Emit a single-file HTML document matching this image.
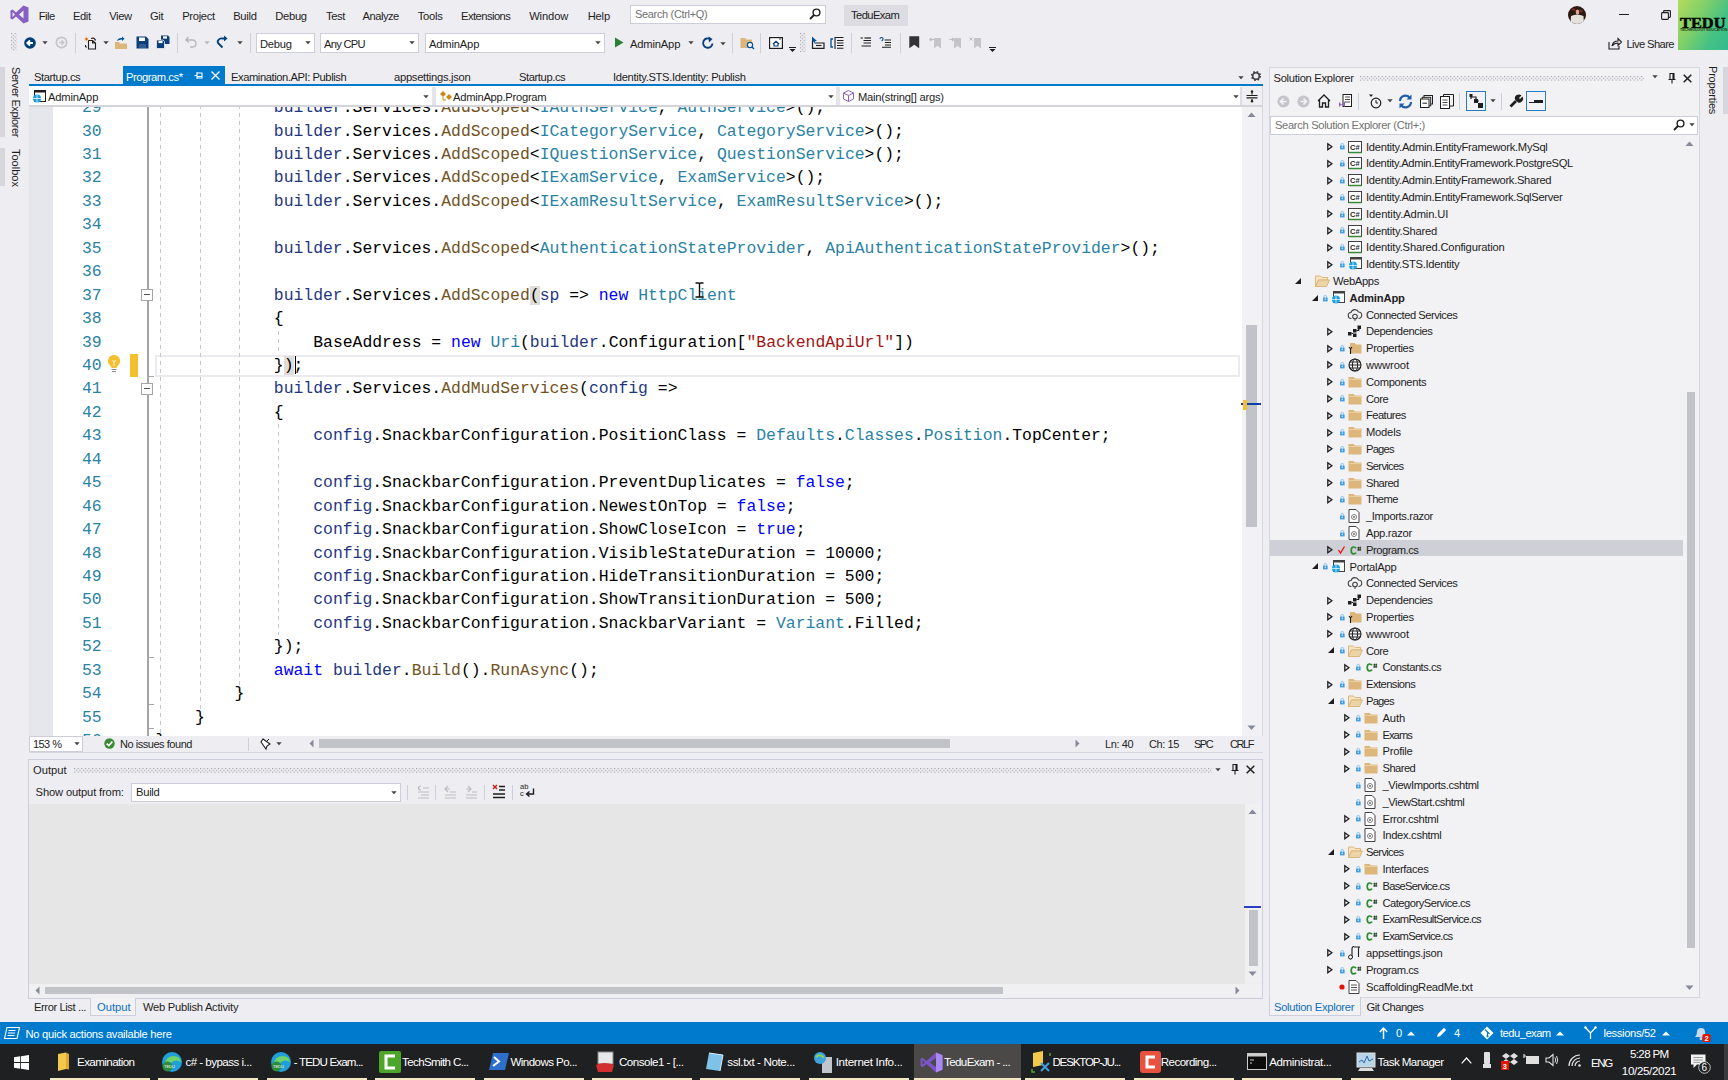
<!DOCTYPE html><html><head><meta charset="utf-8"><style>
html,body{margin:0;padding:0;}
body{width:1728px;height:1080px;overflow:hidden;position:relative;background:#EEEDF1;font-family:"Liberation Sans",sans-serif;}
.t{position:absolute;white-space:nowrap;line-height:1;}
.cl{position:absolute;white-space:pre;font-family:"Liberation Mono",monospace;font-size:16.41px;line-height:23.44px;height:23.44px;}
svg{position:absolute;overflow:visible;}
</style></head><body>
<svg width="0" height="0" style="position:absolute"><defs><pattern id="grp" width="3.6" height="3.6" patternUnits="userSpaceOnUse"><rect x="0" y="0" width="1.1" height="1.1" fill="#9A9AA4"/><rect x="1.8" y="1.8" width="1.1" height="1.1" fill="#9A9AA4"/></pattern></defs></svg>
<svg style="left:10px;top:5px" width="19" height="19" viewBox="0 0 19 19"><path d="M13.5 0.5 L18.5 2.5 L18.5 16.5 L13.5 18.5 L6 11.5 L2.5 14.5 L0.5 13.5 L0.5 5.5 L2.5 4.5 L6 7.5 Z M13.5 5.5 L9 9.5 L13.5 13.5 Z M2.5 7 L2.5 12 L5 9.5 Z" fill="#865FC5" fill-rule="evenodd"/></svg>
<div class="t" style="left:38.800000000000004px;top:10.52px;font-size:11.2px;color:#1E1E1E;letter-spacing:-0.545px;">File</div>
<div class="t" style="left:72.9px;top:10.52px;font-size:11.2px;color:#1E1E1E;letter-spacing:-0.386px;">Edit</div>
<div class="t" style="left:109.2px;top:10.52px;font-size:11.2px;color:#1E1E1E;letter-spacing:-0.367px;">View</div>
<div class="t" style="left:149.89999999999998px;top:10.52px;font-size:11.2px;color:#1E1E1E;letter-spacing:-0.246px;">Git</div>
<div class="t" style="left:182.2px;top:10.52px;font-size:11.2px;color:#1E1E1E;letter-spacing:-0.323px;">Project</div>
<div class="t" style="left:233.2px;top:10.52px;font-size:11.2px;color:#1E1E1E;letter-spacing:-0.276px;">Build</div>
<div class="t" style="left:275.2px;top:10.52px;font-size:11.2px;color:#1E1E1E;letter-spacing:-0.266px;">Debug</div>
<div class="t" style="left:325.9px;top:10.52px;font-size:11.2px;color:#1E1E1E;letter-spacing:-0.331px;">Test</div>
<div class="t" style="left:362.5px;top:10.52px;font-size:11.2px;color:#1E1E1E;letter-spacing:-0.500px;">Analyze</div>
<div class="t" style="left:417.7px;top:10.52px;font-size:11.2px;color:#1E1E1E;letter-spacing:-0.216px;">Tools</div>
<div class="t" style="left:461.09999999999997px;top:10.52px;font-size:11.2px;color:#1E1E1E;letter-spacing:-0.550px;">Extensions</div>
<div class="t" style="left:529.2px;top:10.52px;font-size:11.2px;color:#1E1E1E;letter-spacing:-0.126px;">Window</div>
<div class="t" style="left:587.7px;top:10.52px;font-size:11.2px;color:#1E1E1E;letter-spacing:-0.182px;">Help</div>
<div style="position:absolute;left:630px;top:5px;width:196px;height:19px;background:#FFFFFF;border:1px solid #CCCEDB;box-sizing:border-box;"></div>
<div class="t" style="left:635px;top:9.19px;font-size:11px;color:#717171;letter-spacing:-0.329px;">Search (Ctrl+Q)</div>
<svg style="left:809px;top:8px" width="12" height="12" viewBox="0 0 12 12"><circle cx="7.5" cy="4.5" r="3.4" fill="none" stroke="#1E1E1E" stroke-width="1.4"/><path d="M5 7 L1 11" stroke="#1E1E1E" stroke-width="1.8"/></svg>
<div style="position:absolute;left:844px;top:5px;width:64px;height:21px;background:#DCDCE2;"></div>
<div class="t" style="left:851px;top:10.02px;font-size:11.2px;color:#1E1E1E;letter-spacing:-0.579px;">TeduExam</div>
<svg style="left:1568px;top:6px" width="18" height="18" viewBox="0 0 18 18"><defs><clipPath id="avc"><circle cx="9" cy="9" r="9"/></clipPath></defs><g clip-path="url(#avc)"><rect width="18" height="18" fill="#2B1A12"/><path d="M3 4 L6 2 L8 5Z M11 3 L15 5 L13 7Z" fill="#8A2A2A"/><ellipse cx="9.5" cy="6" rx="1.8" ry="2.5" fill="#D9A98A"/><path d="M2.5 18 L3 10 Q9 7 15.5 10 L16 18Z" fill="#E6E0DA"/></g></svg>
<div style="position:absolute;left:1619px;top:14px;width:10px;height:1.3px;background:#1E1E1E;"></div>
<svg style="left:1661px;top:10px" width="10" height="10" viewBox="0 0 10 10"><rect x="0.6" y="2.6" width="6.8" height="6.8" rx="0.8" fill="none" stroke="#1E1E1E" stroke-width="1.1"/><path d="M2.6 2.6 V1.4 Q2.6 0.6 3.4 0.6 H8.6 Q9.4 0.6 9.4 1.4 V6.6 Q9.4 7.4 8.6 7.4 H7.4" fill="none" stroke="#1E1E1E" stroke-width="1.1"/></svg>
<div style="position:absolute;left:1678px;top:0;width:50px;height:50px;background:linear-gradient(120deg,#B4DB5C 0%,#7CCF6A 40%,#45C184 70%,#33BB8E 100%);"></div>
<div class="t" style="left:1679.5px;top:14.6px;font-family:'Liberation Serif',serif;font-weight:bold;font-size:15.3px;color:#050805;letter-spacing:0;transform:scaleX(1.07);transform-origin:left;-webkit-text-stroke:0.5px #050805;">TEDU</div>
<div class="t" style="left:1680px;top:29.4px;font-family:'Liberation Sans',sans-serif;font-size:3.6px;color:#1a3a14;letter-spacing:0;transform:scaleX(1.0);transform-origin:left;font-weight:bold;">TECHNOLOGY EDUCATION</div>
<svg style="left:1608px;top:37px" width="14" height="13" viewBox="0 0 14 13"><path d="M1 5 V12 H11 V9" fill="none" stroke="#1E1E1E" stroke-width="1.1"/><path d="M4 9 Q5 4 10 4 V1.5 L13.5 5 L10 8.5 V6 Q6.5 6 4 9Z" fill="none" stroke="#1E1E1E" stroke-width="1.1"/></svg>
<div class="t" style="left:1626.4px;top:38.52px;font-size:11.2px;color:#1E1E1E;letter-spacing:-0.590px;">Live Share</div>
<svg style="left:11px;top:33px" width="5.5" height="18"><rect width="5.5" height="18" fill="url(#grp)"/></svg>
<svg style="left:23.5px;top:37px" width="12" height="12" viewBox="0 0 12 12"><circle cx="6" cy="6" r="5.8" fill="#003E78"/><path d="M9 6 H3.8 M6 3.3 L3.3 6 L6 8.7" stroke="#fff" stroke-width="1.9" fill="none"/></svg>
<svg style="left:42px;top:41px" width="6" height="4"><path d="M0.3 0.3 H5.7 L3 3.3Z" fill="#424242"/></svg>
<svg style="left:55px;top:36px" width="13" height="13" viewBox="0 0 13 13"><circle cx="6.5" cy="6.5" r="6" fill="#C4C4CA"/><circle cx="6.5" cy="6.5" r="4.3" fill="#EEEEF2"/><path d="M4 6.5 H8.5 M6.5 4.3 L8.7 6.5 L6.5 8.7" stroke="#C4C4CA" stroke-width="1.4" fill="none"/></svg>
<div style="position:absolute;left:75px;top:33px;width:1px;height:20px;background:#CCCEDB;"></div>
<svg style="left:84px;top:36px" width="13" height="14" viewBox="0 0 13 14"><path d="M4.5 4.5 H8.5 L11.5 7 V13 H4.5Z M8.5 4.5 V7 H11.5" fill="none" stroke="#1E1E1E" stroke-width="1.1"/><path d="M7 2.5 Q10.5 1 11.5 4.5" fill="none" stroke="#1E1E1E" stroke-width="1.3"/><path d="M1.5 9 V11 H3" stroke="#1E1E1E" fill="none"/><path d="M2.5 0 L3 2 L5 1.5 L3.5 3 L5 4.5 L3 4 L2.5 6 L2 4 L0 4.5 L1.5 3 L0 1.5 L2 2Z" fill="#E8A23A"/><circle cx="2.5" cy="3" r="0.8" fill="#C0392B"/></svg>
<svg style="left:103px;top:41px" width="6" height="4"><path d="M0.3 0.3 H5.7 L3 3.3Z" fill="#424242"/></svg>
<svg style="left:114px;top:36px" width="14" height="14" viewBox="0 0 14 14"><path d="M1 6 H5 L6 7.5 H13 V13 H1Z" fill="#DCB67A"/><path d="M3 5 Q4 1.5 8 2 V0.5 L10.5 2.8 L8 5 V3.5 Q5 3.5 3 5" fill="#00539C"/></svg>
<svg style="left:136px;top:36px" width="13" height="13" viewBox="0 0 13 13"><path d="M0.5 0.5 H10 L12.5 3 V12.5 H0.5Z" fill="#0B3F7C"/><rect x="3" y="1.5" width="6" height="3.5" fill="#fff"/><rect x="3" y="8" width="7" height="4.5" fill="#fff" opacity="0.15"/></svg>
<svg style="left:156px;top:35px" width="14" height="14" viewBox="0 0 14 14"><path d="M5 0.5 H12 L13.5 2 V9 H5Z" fill="#0B3F7C"/><rect x="7" y="1.3" width="4" height="2.3" fill="#fff"/><path d="M0.5 5 H7 L8.5 6.5 V13.5 H0.5Z" fill="#0B3F7C" stroke="#EEEDF1" stroke-width="0.8"/><rect x="2.5" y="5.8" width="4" height="2.3" fill="#fff"/></svg>
<div style="position:absolute;left:177px;top:33px;width:1px;height:20px;background:#CCCEDB;"></div>
<svg style="left:185px;top:36px" width="12" height="12" viewBox="0 0 12 12"><path d="M3.5 1 L1 4 L4 6.5 M1.2 4 H7 Q11 4 11 8 Q11 11 7 11 H5" stroke="#B8B8C0" stroke-width="1.4" fill="none"/></svg>
<svg style="left:204px;top:41px" width="6" height="4"><path d="M0.3 0.3 H5.7 L3 3.3Z" fill="#B8B8C0"/></svg>
<svg style="left:216px;top:35px" width="12" height="14" viewBox="0 0 12 14"><path d="M6.5 12.5 L2.5 8.5 Q0.8 6.8 2.5 4.8 Q4 3 6.5 3.5 H9" fill="none" stroke="#00437A" stroke-width="1.8"/><path d="M8 0.5 L11.5 3.5 L8 6.5Z" fill="#00437A"/></svg>
<svg style="left:237px;top:41px" width="6" height="4"><path d="M0.3 0.3 H5.7 L3 3.3Z" fill="#424242"/></svg>
<div style="position:absolute;left:250px;top:33px;width:1px;height:20px;background:#CCCEDB;"></div>
<div style="position:absolute;left:256px;top:32.8px;width:59px;height:20.7px;background:#FFFFFF;border:1px solid #CCCEDB;box-sizing:border-box;"></div>
<div class="t" style="left:260px;top:38.52px;font-size:11.2px;color:#1E1E1E;letter-spacing:-0.266px;">Debug</div>
<svg style="left:305px;top:41.3px" width="6" height="4"><path d="M0.3 0.3 H5.7 L3 3.3Z" fill="#424242"/></svg>
<div style="position:absolute;left:320px;top:32.8px;width:99px;height:20.7px;background:#FFFFFF;border:1px solid #CCCEDB;box-sizing:border-box;"></div>
<div class="t" style="left:324px;top:38.52px;font-size:11.2px;color:#1E1E1E;letter-spacing:-0.743px;">Any CPU</div>
<svg style="left:409px;top:41.3px" width="6" height="4"><path d="M0.3 0.3 H5.7 L3 3.3Z" fill="#424242"/></svg>
<div style="position:absolute;left:425px;top:32.8px;width:180px;height:20.7px;background:#FFFFFF;border:1px solid #CCCEDB;box-sizing:border-box;"></div>
<div class="t" style="left:429px;top:38.52px;font-size:11.2px;color:#1E1E1E;letter-spacing:-0.175px;">AdminApp</div>
<svg style="left:595px;top:41.3px" width="6" height="4"><path d="M0.3 0.3 H5.7 L3 3.3Z" fill="#424242"/></svg>
<svg style="left:614px;top:37px" width="10" height="11"><path d="M1 0.5 L9.5 5.5 L1 10.5Z" fill="#2A7F35"/></svg>
<div class="t" style="left:630px;top:38.52px;font-size:11.2px;color:#1E1E1E;letter-spacing:-0.175px;">AdminApp</div>
<svg style="left:688px;top:41px" width="6" height="4"><path d="M0.3 0.3 H5.7 L3 3.3Z" fill="#424242"/></svg>
<svg style="left:701px;top:36px" width="14" height="14" viewBox="0 0 14 14"><path d="M11.5 7.5 A4.7 4.7 0 1 1 9.5 3.2" stroke="#0B3F7C" stroke-width="1.9" fill="none"/><path d="M7.5 0.5 L11.5 3 L8 6.5Z" fill="#0B3F7C"/></svg>
<svg style="left:720px;top:42px" width="6" height="4"><path d="M0.3 0.3 H5.7 L3 3.3Z" fill="#424242"/></svg>
<div style="position:absolute;left:732px;top:33px;width:1px;height:20px;background:#CCCEDB;"></div>
<svg style="left:740px;top:36px" width="15" height="14" viewBox="0 0 15 14"><path d="M0.5 2 H5 L6.5 3.5 H12 V12 H0.5Z" fill="#DCB67A"/><circle cx="10" cy="9" r="2.6" fill="#fff" stroke="#00539C" stroke-width="1.2"/><path d="M12 11 L14 13" stroke="#00539C" stroke-width="1.5"/></svg>
<div style="position:absolute;left:760px;top:33px;width:1px;height:20px;background:#CCCEDB;"></div>
<svg style="left:769px;top:37px" width="14" height="12" viewBox="0 0 14 12"><rect x="0.6" y="0.6" width="12.8" height="10.8" fill="#fff" stroke="#1E1E1E" stroke-width="1.2"/><path d="M4 7 L7 4.2 L10 7 M5 6.5 V9 H9 V6.5" stroke="#0B3F7C" fill="none" stroke-width="1.2"/><path d="M10 2 H12" stroke="#1E1E1E" stroke-width="0.8"/></svg>
<svg style="left:788.5px;top:46.5px" width="7" height="5" viewBox="0 0 7 5"><path d="M0 0.5 H7" stroke="#1E1E1E" stroke-width="1"/><path d="M0.5 2 H6.5 L3.5 5Z" fill="#1E1E1E"/></svg>
<svg style="left:800px;top:33px" width="5.5" height="19"><rect width="5.5" height="19" fill="url(#grp)"/></svg>
<svg style="left:811px;top:36px" width="14" height="13" viewBox="0 0 14 13"><path d="M1 0.5 V7 L2.6 5.4 L4 8 L5 7.5 L3.8 5 H6Z" fill="#00539C"/><path d="M1.5 5 V12.3 H13 V7 H5" fill="none" stroke="#1E1E1E" stroke-width="1.2"/><path d="M5 9.5 H10.5" stroke="#1E1E1E" stroke-width="1.1"/></svg>
<svg style="left:830px;top:36px" width="15" height="14" viewBox="0 0 15 14"><path d="M3 3 H1 V11 H3" fill="none" stroke="#00539C" stroke-width="1.3"/><path d="M5 1 V13 M5 1.5 H13.5 M7 4.5 H13.5 M7 7 H13.5 M7 9.5 H13.5 M7 12.3 H13.5" stroke="#1E1E1E" stroke-width="1.1"/></svg>
<div style="position:absolute;left:850.5px;top:33px;width:1px;height:20px;background:#CCCEDB;"></div>
<svg style="left:860px;top:37px" width="12" height="10" viewBox="0 0 12 10"><path d="M0.5 1 H3 M3.5 3.5 H11 M3.5 6 H11 M1.5 9 H11" stroke="#1E1E1E" stroke-width="1.2"/><path d="M4.5 1 H11" stroke="#1E1E1E" stroke-width="1.2"/></svg>
<svg style="left:879px;top:37px" width="13" height="11" viewBox="0 0 13 11"><path d="M1 2 Q1 0.5 2.5 0.5 Q4 0.5 4 2 Q4 3.5 2.5 4" fill="none" stroke="#00539C" stroke-width="1.2"/><path d="M5.5 3 H12 M6 5.5 H12 M6 8 H12 M3 10.3 H12" stroke="#1E1E1E" stroke-width="1.1"/></svg>
<div style="position:absolute;left:899.5px;top:33px;width:1px;height:20px;background:#CCCEDB;"></div>
<svg style="left:909px;top:36px" width="10.5" height="12.5" viewBox="0 0 10.5 12.5"><path d="M0.3 0.3 H10.2 V12.2 L5.25 8.8 L0.3 12.2Z" fill="#333337"/></svg>
<svg style="left:929px;top:37px" width="13" height="12" viewBox="0 0 13 12"><path d="M5 1 H12 V11.5 L8.5 8.8 L5 11.5Z" fill="#C4C4CA"/><path d="M5 2.5 H0.8 M2.5 0.8 L0.8 2.5 L2.5 4.2" stroke="#BBBBC2" stroke-width="1.1" fill="none"/></svg>
<svg style="left:949px;top:37px" width="13" height="12" viewBox="0 0 13 12"><path d="M5 1 H12 V11.5 L8.5 8.8 L5 11.5Z" fill="#C4C4CA"/><path d="M0.5 2.5 H4.5 M3 0.8 L4.7 2.5 L3 4.2" stroke="#BBBBC2" stroke-width="1.1" fill="none"/></svg>
<svg style="left:969px;top:37px" width="13" height="12" viewBox="0 0 13 12"><path d="M5 1 H12 V11.5 L8.5 8.8 L5 11.5Z" fill="#C4C4CA"/><path d="M0.5 0.5 L3.5 3.5 M3.5 0.5 L0.5 3.5" stroke="#BBBBC2" stroke-width="1"/></svg>
<svg style="left:988.5px;top:46.5px" width="7" height="5" viewBox="0 0 7 5"><path d="M0 0.5 H7" stroke="#1E1E1E" stroke-width="1"/><path d="M0.5 2 H6.5 L3.5 5Z" fill="#1E1E1E"/></svg>
<div style="position:absolute;left:0px;top:67px;width:5px;height:70px;background:#D6D6DC;"></div>
<div style="position:absolute;left:0px;top:148px;width:5px;height:38px;background:#D6D6DC;"></div>
<div class="t" style="left:21px;top:67px;font-size:11px;color:#1E1E1E;letter-spacing:-0.43px;transform:rotate(90deg);transform-origin:0 0;">Server Explorer</div>
<div class="t" style="left:21px;top:148.5px;font-size:11px;color:#1E1E1E;letter-spacing:0px;transform:rotate(90deg);transform-origin:0 0;">Toolbox</div>
<div style="position:absolute;left:29px;top:84px;width:1234px;height:2px;background:#007ACC;"></div>
<div style="position:absolute;left:123px;top:66px;width:102px;height:19px;background:#007ACC;"></div>
<div class="t" style="left:34px;top:72.02px;font-size:11.2px;color:#1E1E1E;letter-spacing:-0.411px;">Startup.cs</div>
<div class="t" style="left:126px;top:72.02px;font-size:11.2px;color:#FFFFFF;letter-spacing:-0.454px;">Program.cs*</div>
<svg style="left:194px;top:71px" width="10" height="9" viewBox="0 0 10 9"><path d="M0.5 4.5 H3 M3 1 V8 M3 2 H8 V7 H3 M3 5.5 H8" stroke="#fff" fill="none" stroke-width="1.1"/></svg>
<svg style="left:211px;top:71px" width="9" height="9" viewBox="0 0 9 9"><path d="M0.5 0.5 L8.5 8.5 M8.5 0.5 L0.5 8.5" stroke="#fff" stroke-width="1.3"/></svg>
<div class="t" style="left:231px;top:72.02px;font-size:11.2px;color:#1E1E1E;letter-spacing:-0.434px;">Examination.API: Publish</div>
<div class="t" style="left:394px;top:72.02px;font-size:11.2px;color:#1E1E1E;letter-spacing:-0.273px;">appsettings.json</div>
<div class="t" style="left:519px;top:72.02px;font-size:11.2px;color:#1E1E1E;letter-spacing:-0.411px;">Startup.cs</div>
<div class="t" style="left:613px;top:72.02px;font-size:11.2px;color:#1E1E1E;letter-spacing:-0.320px;">Identity.STS.Identity: Publish</div>
<svg style="left:1238px;top:76px" width="6" height="4"><path d="M0.3 0.3 H5.7 L3 3.3Z" fill="#424242"/></svg>
<svg style="left:1251px;top:71px" width="10" height="10" viewBox="0 0 10 10"><circle cx="5" cy="5" r="3.3" fill="none" stroke="#424242" stroke-width="1.6"/><circle cx="5" cy="5" r="4.3" fill="none" stroke="#424242" stroke-width="1.6" stroke-dasharray="1.6 1.78"/></svg>
<div style="position:absolute;left:29px;top:86px;width:1234px;height:21px;background:#FFFFFF;border-bottom:1px solid #CCCEDB;box-sizing:border-box;"></div>
<div style="position:absolute;left:432px;top:87px;width:3.5px;height:18px;background:#E4E4EA;"></div>
<div style="position:absolute;left:836px;top:87px;width:3.5px;height:18px;background:#E4E4EA;"></div>
<div style="position:absolute;left:1241px;top:86px;width:21px;height:19.5px;background:#F0F0F2;"></div>
<svg style="left:32px;top:90px" width="14" height="13" viewBox="0 0 14 13"><rect x="2.5" y="0.5" width="11" height="11" fill="#fff" stroke="#1E1E1E"/><rect x="2.5" y="0.5" width="11" height="2" fill="#1E1E1E"/><circle cx="5" cy="8.5" r="4" fill="#1BA1E2"/><path d="M1 8.5 H9 M5 4.5 V12.5" stroke="#fff" stroke-width="0.7"/></svg>
<div class="t" style="left:48px;top:91.52px;font-size:11.2px;color:#1E1E1E;letter-spacing:-0.175px;">AdminApp</div>
<svg style="left:423px;top:95px" width="6" height="4"><path d="M0.3 0.3 H5.7 L3 3.3Z" fill="#424242"/></svg>
<svg style="left:439px;top:90px" width="13" height="12" viewBox="0 0 13 12"><path d="M1 4 L4 1 L7 4 L4 7Z" fill="#D18616"/><path d="M7 7 L10 4 L13 7 L10 10Z" fill="#D18616"/><path d="M4 7 V10 H7" stroke="#D18616" fill="none"/></svg>
<div class="t" style="left:453px;top:91.52px;font-size:11.2px;color:#1E1E1E;letter-spacing:-0.267px;">AdminApp.Program</div>
<svg style="left:828px;top:95px" width="6" height="4"><path d="M0.3 0.3 H5.7 L3 3.3Z" fill="#424242"/></svg>
<svg style="left:843px;top:90px" width="11" height="12" viewBox="0 0 11 12"><path d="M5.5 0.5 L10.5 3 V9 L5.5 11.5 L0.5 9 V3Z M0.5 3 L5.5 5.5 L10.5 3 M5.5 5.5 V11.5" fill="none" stroke="#8B5FC5" stroke-width="1"/></svg>
<div class="t" style="left:858px;top:91.52px;font-size:11.2px;color:#1E1E1E;letter-spacing:-0.229px;">Main(string[] args)</div>
<svg style="left:1233px;top:95px" width="6" height="4"><path d="M0.3 0.3 H5.7 L3 3.3Z" fill="#424242"/></svg>
<svg style="left:1246px;top:90px" width="12" height="13" viewBox="0 0 12 13"><path d="M0.5 5.5 H11.5 M0.5 7.8 H11.5" stroke="#1E1E1E" stroke-width="1.2"/><path d="M6 1.5 V4.5 M6 9 V11.5" stroke="#1E1E1E" stroke-width="1.2"/><circle cx="6" cy="1.5" r="1.2" fill="#1E1E1E"/><circle cx="6" cy="11.3" r="1.2" fill="#1E1E1E"/></svg>
<div style="position:absolute;left:1240px;top:87px;width:2px;height:18px;background:#DCDCE2;"></div>
<div style="position:absolute;left:29px;top:104.5px;width:1233px;height:2px;background:#D4D4DA;"></div>
<div style="position:absolute;left:29px;top:107px;width:1233px;height:629px;background:#FFFFFF;overflow:hidden;">
<div style="position:absolute;left:0.00px;top:0.00px;width:24.00px;height:629.00px;background:#E6E7ED;"></div>
<div style="position:absolute;left:126.00px;top:247.50px;width:1085.00px;height:22.00px;border:2px solid #EAEAF0;box-sizing:border-box;"></div>
<div style="position:absolute;left:131.10px;top:-34.18px;width:1.00px;height:702.76px;background:repeating-linear-gradient(180deg,#C8C8C8 0 4px,transparent 4px 8px);"></div>
<div style="position:absolute;left:170.50px;top:-34.18px;width:1.00px;height:655.88px;background:repeating-linear-gradient(180deg,#C8C8C8 0 4px,transparent 4px 8px);"></div>
<div style="position:absolute;left:209.90px;top:-34.18px;width:1.00px;height:632.44px;background:repeating-linear-gradient(180deg,#C8C8C8 0 4px,transparent 4px 8px);"></div>
<div style="position:absolute;left:249.30px;top:223.66px;width:1.00px;height:23.00px;background:repeating-linear-gradient(180deg,#C8C8C8 0 4px,transparent 4px 8px);"></div>
<div style="position:absolute;left:249.30px;top:317.42px;width:1.00px;height:210.52px;background:repeating-linear-gradient(180deg,#C8C8C8 0 4px,transparent 4px 8px);"></div>
<div style="position:absolute;left:118.00px;top:0.00px;width:2.00px;height:629.00px;background:#A5A5A5;"></div>
<div style="position:absolute;left:112.00px;top:181.78px;width:12.00px;height:12.00px;background:#fff;border:1px solid #A5A5A5;box-sizing:border-box;"></div>
<div style="position:absolute;left:115.00px;top:187.28px;width:6.00px;height:1.00px;background:#555;"></div>
<div style="position:absolute;left:112.00px;top:275.54px;width:12.00px;height:12.00px;background:#fff;border:1px solid #A5A5A5;box-sizing:border-box;"></div>
<div style="position:absolute;left:115.00px;top:281.04px;width:6.00px;height:1.00px;background:#555;"></div>
<div style="position:absolute;left:120.00px;top:269.10px;width:5.00px;height:1.00px;background:#A5A5A5;"></div>
<div style="position:absolute;left:120.00px;top:550.38px;width:5.00px;height:1.00px;background:#A5A5A5;"></div>
<div style="position:absolute;left:120.00px;top:597.26px;width:5.00px;height:1.00px;background:#A5A5A5;"></div>
<div style="position:absolute;left:120.00px;top:620.70px;width:5.00px;height:1.00px;background:#A5A5A5;"></div>
<div style="position:absolute;left:101.00px;top:247.00px;width:7.50px;height:23.00px;background:#F4C02F;"></div>
<svg style="left:78px;top:247px" width="14" height="20" viewBox="0 0 14 20"><path d="M7 1 A6 6 0 0 1 11 11.5 Q9.5 12.5 9.5 14 H4.5 Q4.5 12.5 3 11.5 A6 6 0 0 1 7 1Z" fill="#F4C02F"/><path d="M5.5 6 L7 8 L8.5 6 M7 8 V12" stroke="#fff" fill="none" stroke-width="0.9"/><path d="M4.5 15.5 H9.5 M5 17.5 H9" stroke="#888" stroke-width="1.1"/></svg>
<div class="cl" style="left:43.05px;top:-10.83px;width:29.55px;text-align:right;color:#2A82A4;">29</div>
<div class="cl" style="left:43.05px;top:12.61px;width:29.55px;text-align:right;color:#2A82A4;">30</div>
<div class="cl" style="left:43.05px;top:36.05px;width:29.55px;text-align:right;color:#2A82A4;">31</div>
<div class="cl" style="left:43.05px;top:59.49px;width:29.55px;text-align:right;color:#2A82A4;">32</div>
<div class="cl" style="left:43.05px;top:82.93px;width:29.55px;text-align:right;color:#2A82A4;">33</div>
<div class="cl" style="left:43.05px;top:106.37px;width:29.55px;text-align:right;color:#2A82A4;">34</div>
<div class="cl" style="left:43.05px;top:129.81px;width:29.55px;text-align:right;color:#2A82A4;">35</div>
<div class="cl" style="left:43.05px;top:153.25px;width:29.55px;text-align:right;color:#2A82A4;">36</div>
<div class="cl" style="left:43.05px;top:176.69px;width:29.55px;text-align:right;color:#2A82A4;">37</div>
<div class="cl" style="left:43.05px;top:200.13px;width:29.55px;text-align:right;color:#2A82A4;">38</div>
<div class="cl" style="left:43.05px;top:223.57px;width:29.55px;text-align:right;color:#2A82A4;">39</div>
<div class="cl" style="left:43.05px;top:247.01px;width:29.55px;text-align:right;color:#2A82A4;">40</div>
<div class="cl" style="left:43.05px;top:270.45px;width:29.55px;text-align:right;color:#2A82A4;">41</div>
<div class="cl" style="left:43.05px;top:293.89px;width:29.55px;text-align:right;color:#2A82A4;">42</div>
<div class="cl" style="left:43.05px;top:317.33px;width:29.55px;text-align:right;color:#2A82A4;">43</div>
<div class="cl" style="left:43.05px;top:340.77px;width:29.55px;text-align:right;color:#2A82A4;">44</div>
<div class="cl" style="left:43.05px;top:364.21px;width:29.55px;text-align:right;color:#2A82A4;">45</div>
<div class="cl" style="left:43.05px;top:387.65px;width:29.55px;text-align:right;color:#2A82A4;">46</div>
<div class="cl" style="left:43.05px;top:411.09px;width:29.55px;text-align:right;color:#2A82A4;">47</div>
<div class="cl" style="left:43.05px;top:434.53px;width:29.55px;text-align:right;color:#2A82A4;">48</div>
<div class="cl" style="left:43.05px;top:457.97px;width:29.55px;text-align:right;color:#2A82A4;">49</div>
<div class="cl" style="left:43.05px;top:481.41px;width:29.55px;text-align:right;color:#2A82A4;">50</div>
<div class="cl" style="left:43.05px;top:504.85px;width:29.55px;text-align:right;color:#2A82A4;">51</div>
<div class="cl" style="left:43.05px;top:528.29px;width:29.55px;text-align:right;color:#2A82A4;">52</div>
<div class="cl" style="left:43.05px;top:551.73px;width:29.55px;text-align:right;color:#2A82A4;">53</div>
<div class="cl" style="left:43.05px;top:575.17px;width:29.55px;text-align:right;color:#2A82A4;">54</div>
<div class="cl" style="left:43.05px;top:598.61px;width:29.55px;text-align:right;color:#2A82A4;">55</div>
<div class="cl" style="left:43.05px;top:622.05px;width:29.55px;text-align:right;color:#2A82A4;">56</div>
<div class="cl" style="left:244.80px;top:-10.83px;"><span style="color:#1F377F;">builder</span><span style="color:#000000;">.Services.</span><span style="color:#74531F;">AddScoped</span><span style="color:#000000;">&lt;</span><span style="color:#2A82A4;">IAuthService</span><span style="color:#000000;">, </span><span style="color:#2A82A4;">AuthService</span><span style="color:#000000;">&gt;();</span></div>
<div class="cl" style="left:244.80px;top:12.61px;"><span style="color:#1F377F;">builder</span><span style="color:#000000;">.Services.</span><span style="color:#74531F;">AddScoped</span><span style="color:#000000;">&lt;</span><span style="color:#2A82A4;">ICategoryService</span><span style="color:#000000;">, </span><span style="color:#2A82A4;">CategoryService</span><span style="color:#000000;">&gt;();</span></div>
<div class="cl" style="left:244.80px;top:36.05px;"><span style="color:#1F377F;">builder</span><span style="color:#000000;">.Services.</span><span style="color:#74531F;">AddScoped</span><span style="color:#000000;">&lt;</span><span style="color:#2A82A4;">IQuestionService</span><span style="color:#000000;">, </span><span style="color:#2A82A4;">QuestionService</span><span style="color:#000000;">&gt;();</span></div>
<div class="cl" style="left:244.80px;top:59.49px;"><span style="color:#1F377F;">builder</span><span style="color:#000000;">.Services.</span><span style="color:#74531F;">AddScoped</span><span style="color:#000000;">&lt;</span><span style="color:#2A82A4;">IExamService</span><span style="color:#000000;">, </span><span style="color:#2A82A4;">ExamService</span><span style="color:#000000;">&gt;();</span></div>
<div class="cl" style="left:244.80px;top:82.93px;"><span style="color:#1F377F;">builder</span><span style="color:#000000;">.Services.</span><span style="color:#74531F;">AddScoped</span><span style="color:#000000;">&lt;</span><span style="color:#2A82A4;">IExamResultService</span><span style="color:#000000;">, </span><span style="color:#2A82A4;">ExamResultService</span><span style="color:#000000;">&gt;();</span></div>
<div class="cl" style="left:244.80px;top:129.81px;"><span style="color:#1F377F;">builder</span><span style="color:#000000;">.Services.</span><span style="color:#74531F;">AddScoped</span><span style="color:#000000;">&lt;</span><span style="color:#2A82A4;">AuthenticationStateProvider</span><span style="color:#000000;">, </span><span style="color:#2A82A4;">ApiAuthenticationStateProvider</span><span style="color:#000000;">&gt;();</span></div>
<div class="cl" style="left:244.80px;top:176.69px;"><span style="color:#1F377F;">builder</span><span style="color:#000000;">.Services.</span><span style="color:#74531F;">AddScoped</span><span style="color:#000000;background:#E0DDD8;">(</span><span style="color:#1F377F;">sp</span><span style="color:#000000;"> =&gt; </span><span style="color:#0000FF;">new</span><span style="color:#000000;"> </span><span style="color:#2A82A4;">HttpClient</span></div>
<div class="cl" style="left:244.80px;top:200.13px;"><span style="color:#000000;">{</span></div>
<div class="cl" style="left:284.20px;top:223.57px;"><span style="color:#000000;">BaseAddress</span><span style="color:#000000;"> = </span><span style="color:#0000FF;">new</span><span style="color:#000000;"> </span><span style="color:#2A82A4;">Uri</span><span style="color:#000000;">(</span><span style="color:#1F377F;">builder</span><span style="color:#000000;">.Configuration[</span><span style="color:#A31515;">&quot;BackendApiUrl&quot;</span><span style="color:#000000;">])</span></div>
<div class="cl" style="left:244.80px;top:247.01px;"><span style="color:#000000;">}</span><span style="color:#000000;background:#E0DDD8;">)</span><span style="color:#000000;">;</span></div>
<div class="cl" style="left:244.80px;top:270.45px;"><span style="color:#1F377F;">builder</span><span style="color:#000000;">.Services.</span><span style="color:#74531F;">AddMudServices</span><span style="color:#000000;">(</span><span style="color:#1F377F;">config</span><span style="color:#000000;"> =&gt;</span></div>
<div class="cl" style="left:244.80px;top:293.89px;"><span style="color:#000000;">{</span></div>
<div class="cl" style="left:284.20px;top:317.33px;"><span style="color:#1F377F;">config</span><span style="color:#000000;">.SnackbarConfiguration.PositionClass = </span><span style="color:#2A82A4;">Defaults</span><span style="color:#000000;">.</span><span style="color:#2A82A4;">Classes</span><span style="color:#000000;">.</span><span style="color:#2A82A4;">Position</span><span style="color:#000000;">.TopCenter;</span></div>
<div class="cl" style="left:284.20px;top:364.21px;"><span style="color:#1F377F;">config</span><span style="color:#000000;">.SnackbarConfiguration.PreventDuplicates = </span><span style="color:#0000FF;">false</span><span style="color:#000000;">;</span></div>
<div class="cl" style="left:284.20px;top:387.65px;"><span style="color:#1F377F;">config</span><span style="color:#000000;">.SnackbarConfiguration.NewestOnTop = </span><span style="color:#0000FF;">false</span><span style="color:#000000;">;</span></div>
<div class="cl" style="left:284.20px;top:411.09px;"><span style="color:#1F377F;">config</span><span style="color:#000000;">.SnackbarConfiguration.ShowCloseIcon = </span><span style="color:#0000FF;">true</span><span style="color:#000000;">;</span></div>
<div class="cl" style="left:284.20px;top:434.53px;"><span style="color:#1F377F;">config</span><span style="color:#000000;">.SnackbarConfiguration.VisibleStateDuration = 10000;</span></div>
<div class="cl" style="left:284.20px;top:457.97px;"><span style="color:#1F377F;">config</span><span style="color:#000000;">.SnackbarConfiguration.HideTransitionDuration = 500;</span></div>
<div class="cl" style="left:284.20px;top:481.41px;"><span style="color:#1F377F;">config</span><span style="color:#000000;">.SnackbarConfiguration.ShowTransitionDuration = 500;</span></div>
<div class="cl" style="left:284.20px;top:504.85px;"><span style="color:#1F377F;">config</span><span style="color:#000000;">.SnackbarConfiguration.SnackbarVariant = </span><span style="color:#2A82A4;">Variant</span><span style="color:#000000;">.Filled;</span></div>
<div class="cl" style="left:244.80px;top:528.29px;"><span style="color:#000000;">});</span></div>
<div class="cl" style="left:244.80px;top:551.73px;"><span style="color:#0000FF;">await</span><span style="color:#000000;"> </span><span style="color:#1F377F;">builder</span><span style="color:#000000;">.</span><span style="color:#74531F;">Build</span><span style="color:#000000;">().</span><span style="color:#74531F;">RunAsync</span><span style="color:#000000;">();</span></div>
<div class="cl" style="left:205.40px;top:575.17px;"><span style="color:#000000;">}</span></div>
<div class="cl" style="left:166.00px;top:598.61px;"><span style="color:#000000;">}</span></div>
<div class="cl" style="left:126.60px;top:622.05px;"><span style="color:#000000;">}</span></div>
<div style="position:absolute;left:265.50px;top:249.10px;width:1.50px;height:18.00px;background:#000;"></div>
<svg style="left:666px;top:175px" width="9" height="16" viewBox="0 0 9 16"><path d="M0.5 1 H3.5 Q4.5 1 4.5 2 V14 Q4.5 15 3.5 15 H0.5 M8.5 1 H5.5 Q4.5 1 4.5 2 M4.5 14 Q4.5 15 5.5 15 H8.5" stroke="#111" stroke-width="1.4" fill="none"/></svg>
<div style="position:absolute;left:1213.00px;top:0.00px;width:20.00px;height:629.00px;background:#F2F2F4;"></div>
<svg style="left:1218px;top:5px" width="9" height="6"><path d="M0.5 5 L4.5 0.5 L8.5 5Z" fill="#868999"/></svg>
<svg style="left:1218px;top:618px" width="9" height="6"><path d="M0.5 0.5 L4.5 5 L8.5 0.5Z" fill="#868999"/></svg>
<div style="position:absolute;left:1217.00px;top:218.00px;width:11.00px;height:202.00px;background:#C2C3C9;"></div>
<div style="position:absolute;left:1212.00px;top:296.00px;width:20.00px;height:2.00px;background:#0E3FA6;"></div>
<div style="position:absolute;left:1214.00px;top:293.00px;width:4.00px;height:10.00px;background:#F4C02F;"></div>
</div>
<div style="position:absolute;left:1262px;top:86px;width:1px;height:666px;background:#D6D6DE;"></div>
<div style="position:absolute;left:29px;top:736px;width:1234px;height:16px;background:#EEEEF2;"></div>
<div style="position:absolute;left:29px;top:736px;width:54px;height:16px;background:#FFFFFF;border:1px solid #CCCEDB;box-sizing:border-box;"></div>
<div class="t" style="left:33px;top:738.69px;font-size:11px;color:#1E1E1E;letter-spacing:-0.558px;">153 %</div>
<svg style="left:74px;top:742px" width="6" height="4"><path d="M0.3 0.3 H5.7 L3 3.3Z" fill="#424242"/></svg>
<svg style="left:104px;top:738px" width="11" height="11" viewBox="0 0 11 11"><circle cx="5.5" cy="5.5" r="5.2" fill="#388A34"/><path d="M2.7 5.6 L4.8 7.6 L8.4 3.6" stroke="#fff" stroke-width="1.6" fill="none"/></svg>
<div class="t" style="left:120px;top:738.69px;font-size:11px;color:#1E1E1E;letter-spacing:-0.463px;">No issues found</div>
<div style="position:absolute;left:248px;top:738px;width:1px;height:13px;background:#CCCEDB;"></div>
<svg style="left:260px;top:738px" width="12" height="12" viewBox="0 0 12 12"><path d="M3 1 L10 6 L7 8 L6 11 L1 4Z" fill="#fff" stroke="#1E1E1E" stroke-width="1.1"/><path d="M6 4 L9 1" stroke="#1E1E1E"/></svg>
<svg style="left:276px;top:742px" width="6" height="4"><path d="M0.3 0.3 H5.7 L3 3.3Z" fill="#424242"/></svg>
<svg style="left:309px;top:739px" width="5" height="9"><path d="M4.5 0.5 V8.5 L0.5 4.5Z" fill="#868999"/></svg>
<div style="position:absolute;left:319px;top:739px;width:631px;height:9px;background:#C2C3C9;"></div>
<svg style="left:1075px;top:739px" width="5" height="9"><path d="M0.5 0.5 V8.5 L4.5 4.5Z" fill="#868999"/></svg>
<div class="t" style="left:1105px;top:738.69px;font-size:11px;color:#1E1E1E;letter-spacing:-0.411px;">Ln: 40</div>
<div class="t" style="left:1149px;top:738.69px;font-size:11px;color:#1E1E1E;letter-spacing:-0.431px;">Ch: 15</div>
<div class="t" style="left:1194px;top:738.69px;font-size:11px;color:#1E1E1E;letter-spacing:-1.480px;">SPC</div>
<div class="t" style="left:1230px;top:738.69px;font-size:11px;color:#1E1E1E;letter-spacing:-1.421px;">CRLF</div>
<div style="position:absolute;left:29px;top:752px;width:1234px;height:1.2px;background:#D6D6DE;"></div>
<div style="position:absolute;left:28px;top:758.5px;width:1235px;height:240px;background:#EEEEF2;border:1px solid #CCCEDB;border-top-width:1.5px;box-sizing:border-box;"></div>
<div class="t" style="left:33px;top:764.52px;font-size:11.2px;color:#1E1E1E;letter-spacing:-0.016px;">Output</div>
<svg style="left:74px;top:768px" width="1138" height="5"><rect width="1138" height="5" fill="url(#grp)"/></svg>
<svg style="left:1215px;top:768px" width="6" height="4"><path d="M0.3 0.3 H5.7 L3 3.3Z" fill="#424242"/></svg>
<svg style="left:1231px;top:764px" width="8" height="11" viewBox="0 0 8 11"><path d="M1.5 0.5 H6.5 M2 0.5 V6.5 M6 0.5 V6.5 M0.5 6.5 H7.5 M4 6.5 V10.5 M5 1 V6" stroke="#1E1E1E" stroke-width="1.1" fill="none"/></svg>
<svg style="left:1246px;top:765px" width="9" height="9" viewBox="0 0 9 9"><path d="M0.7 0.7 L8.3 8.3 M8.3 0.7 L0.7 8.3" stroke="#1E1E1E" stroke-width="1.5"/></svg>
<div class="t" style="left:35.6px;top:787.02px;font-size:11.2px;color:#1E1E1E;letter-spacing:-0.151px;">Show output from:</div>
<div style="position:absolute;left:131px;top:783px;width:270px;height:19px;background:#FFFFFF;border:1px solid #CCCEDB;box-sizing:border-box;"></div>
<div class="t" style="left:136px;top:787.02px;font-size:11.2px;color:#1E1E1E;letter-spacing:-0.276px;">Build</div>
<svg style="left:391px;top:790.5px" width="6" height="4"><path d="M0.3 0.3 H5.7 L3 3.3Z" fill="#424242"/></svg>
<div style="position:absolute;left:407px;top:785px;width:1px;height:15px;background:#CCCEDB;"></div>
<div style="position:absolute;left:435px;top:785px;width:1px;height:15px;background:#CCCEDB;"></div>
<div style="position:absolute;left:484px;top:785px;width:1px;height:15px;background:#CCCEDB;"></div>
<div style="position:absolute;left:512px;top:785px;width:1px;height:15px;background:#CCCEDB;"></div>
<svg style="left:417px;top:785px" width="13" height="14" viewBox="0 0 13 14"><path d="M4 1 Q1.5 1 1.5 3 Q1.5 5 4 5 M1 7 H12 M4 10 H12 M1 13 H12 M6 3 H12" stroke="#BBBBC2" stroke-width="1.2" fill="none"/></svg>
<svg style="left:444px;top:785px" width="13" height="14" viewBox="0 0 13 14"><path d="M4 1 L1 4 L4 7 M1 4 H6 M6 7 H12 M1 10 H12 M1 13 H12" stroke="#BBBBC2" stroke-width="1.2" fill="none"/></svg>
<svg style="left:465px;top:785px" width="13" height="14" viewBox="0 0 13 14"><path d="M3 1 L6 4 L3 7 M1 4 H6 M7 7 H12 M1 10 H12 M1 13 H12" stroke="#BBBBC2" stroke-width="1.2" fill="none"/></svg>
<svg style="left:492px;top:784px" width="14" height="15" viewBox="0 0 14 15"><path d="M1 1 L5 5 M5 1 L1 5" stroke="#C41A1A" stroke-width="1.4"/><path d="M7 2.5 H13 M7 6 H13 M1 10 H13 M1 13.5 H13" stroke="#1E1E1E" stroke-width="1.5"/></svg>
<div class="t" style="left:520px;top:783px;font-size:7.5px;color:#1E1E1E;line-height:7px;">ab<br>c</div>
<svg style="left:525px;top:788px" width="10" height="10" viewBox="0 0 10 10"><path d="M8.5 0.5 V6 H2 M4.5 3.5 L1.5 6 L4.5 8.5" stroke="#1E1E1E" stroke-width="1.4" fill="none"/></svg>
<div style="position:absolute;left:29px;top:803.5px;width:1216px;height:180px;background:#E6E6E6;"></div>
<div style="position:absolute;left:1245px;top:803.5px;width:17px;height:178.5px;background:#F0F0F2;"></div>
<svg style="left:1248px;top:809px" width="9" height="6"><path d="M0.5 5 L4.5 0.5 L8.5 5Z" fill="#868999"/></svg>
<svg style="left:1248px;top:971px" width="9" height="6"><path d="M0.5 0.5 L4.5 5 L8.5 0.5Z" fill="#868999"/></svg>
<div style="position:absolute;left:1249px;top:910px;width:9px;height:56px;background:#C2C3C9;"></div>
<div style="position:absolute;left:1244px;top:906px;width:17px;height:2px;background:#2B3FC0;"></div>
<div style="position:absolute;left:29px;top:983.5px;width:1233px;height:13.5px;background:#F0F0F2;"></div>
<svg style="left:35px;top:986px" width="5" height="9"><path d="M4.5 0.5 V8.5 L0.5 4.5Z" fill="#868999"/></svg>
<div style="position:absolute;left:45px;top:987px;width:958px;height:7px;background:#C2C3C9;"></div>
<svg style="left:1235px;top:986px" width="5" height="9"><path d="M0.5 0.5 V8.5 L4.5 4.5Z" fill="#868999"/></svg>
<div style="position:absolute;left:90px;top:998px;width:46px;height:17.5px;background:#F2F1F4;border:1px solid #CCCEDB;border-top:none;box-sizing:border-box;"></div>
<div class="t" style="left:34px;top:1002.02px;font-size:11.2px;color:#1E1E1E;letter-spacing:-0.414px;">Error List ...</div>
<div class="t" style="left:97px;top:1002.02px;font-size:11.2px;color:#0E70C0;letter-spacing:-0.016px;">Output</div>
<div class="t" style="left:143px;top:1002.02px;font-size:11.2px;color:#1E1E1E;letter-spacing:-0.264px;">Web Publish Activity</div>
<div style="position:absolute;left:1269px;top:67px;width:431px;height:931px;background:#F2F1F4;border:1px solid #D6D6DE;box-sizing:border-box;"></div>
<div class="t" style="left:1273.5px;top:73.02px;font-size:11.2px;color:#1E1E1E;letter-spacing:-0.299px;">Solution Explorer</div>
<svg style="left:1360px;top:76px" width="284" height="5"><rect width="284" height="5" fill="url(#grp)"/></svg>
<svg style="left:1652px;top:75px" width="6" height="4"><path d="M0.3 0.3 H5.7 L3 3.3Z" fill="#424242"/></svg>
<svg style="left:1668px;top:73px" width="8" height="11" viewBox="0 0 8 11"><path d="M1.5 0.5 H6.5 M2 0.5 V6.5 M6 0.5 V6.5 M0.5 6.5 H7.5 M4 6.5 V10.5 M5 1 V6" stroke="#1E1E1E" stroke-width="1.1" fill="none"/></svg>
<svg style="left:1683px;top:74px" width="9" height="9" viewBox="0 0 9 9"><path d="M0.7 0.7 L8.3 8.3 M8.3 0.7 L0.7 8.3" stroke="#1E1E1E" stroke-width="1.5"/></svg>
<svg style="left:1277px;top:95px" width="13" height="13" viewBox="0 0 13 13"><circle cx="6.5" cy="6.5" r="6" fill="#C4C4CA"/><path d="M9.5 6.5 H4 M6.5 3.5 L3.5 6.5 L6.5 9.5" stroke="#F3F3F6" stroke-width="1.6" fill="none"/></svg>
<svg style="left:1297px;top:95px" width="13" height="13" viewBox="0 0 13 13"><circle cx="6.5" cy="6.5" r="6" fill="#C4C4CA"/><path d="M3.5 6.5 H9 M6.5 3.5 L9.5 6.5 L6.5 9.5" stroke="#F3F3F6" stroke-width="1.6" fill="none"/></svg>
<svg style="left:1317px;top:94px" width="14" height="14" viewBox="0 0 14 14"><path d="M1 7 L7 1 L13 7 M2.5 5.5 V13 H5.5 V9 H8.5 V13 H11.5 V5.5" stroke="#1E1E1E" stroke-width="1.3" fill="none"/></svg>
<svg style="left:1338px;top:94px" width="14" height="14" viewBox="0 0 14 14"><rect x="5" y="0.5" width="8.5" height="12" fill="#fff" stroke="#1E1E1E"/><path d="M7 3 H12 M7 5.5 H12 M7 8 H12" stroke="#1E1E1E" stroke-width="0.8"/><path d="M1 8 L4 11 L7 7 V13 L4 10 L1 13Z" fill="#8B5FC5"/></svg>
<div style="position:absolute;left:1358px;top:93px;width:1px;height:17px;background:#CCCEDB;"></div>
<svg style="left:1368px;top:94px" width="14" height="15" viewBox="0 0 14 15"><circle cx="8" cy="9" r="4.8" fill="none" stroke="#1E1E1E" stroke-width="1.2"/><path d="M8 6 V9 H10" stroke="#1E1E1E" fill="none"/><path d="M1 0.5 H5 L3 3Z" fill="#1E1E1E"/></svg>
<svg style="left:1387px;top:99px" width="6" height="4"><path d="M0.3 0.3 H5.7 L3 3.3Z" fill="#424242"/></svg>
<svg style="left:1398px;top:94px" width="15" height="15" viewBox="0 0 15 15"><path d="M2 7 A5.5 5.5 0 0 1 12 4 M13 8 A5.5 5.5 0 0 1 3 11" stroke="#1F5FAA" stroke-width="2.2" fill="none"/><path d="M13.5 0.5 V5.5 H8.5Z M1.5 14.5 V9.5 H6.5Z" fill="#1F5FAA"/></svg>
<svg style="left:1420px;top:95px" width="13" height="13" viewBox="0 0 13 13"><rect x="4" y="0.5" width="8.5" height="8.5" fill="#fff" stroke="#1E1E1E"/><rect x="2.2" y="2.3" width="8.5" height="8.5" fill="#fff" stroke="#1E1E1E"/><rect x="0.5" y="4" width="8.5" height="8.5" fill="#fff" stroke="#1E1E1E"/><path d="M2.5 8.2 H7" stroke="#1E1E1E"/></svg>
<svg style="left:1440px;top:94px" width="14" height="15" viewBox="0 0 14 15"><rect x="0.5" y="2.5" width="9" height="12" fill="#fff" stroke="#1E1E1E"/><path d="M3.5 2.5 V0.5 H13.5 V12 H9.5" fill="none" stroke="#1E1E1E"/><path d="M2.5 6 H7.5 M2.5 8.5 H7.5 M2.5 11 H7.5" stroke="#1E1E1E" stroke-width="0.8"/></svg>
<div style="position:absolute;left:1459px;top:93px;width:1px;height:17px;background:#CCCEDB;"></div>
<div style="position:absolute;left:1466px;top:91px;width:20px;height:20px;background:#F3F3F6;border:1.5px solid #2A7BC0;box-sizing:border-box;"></div>
<svg style="left:1469px;top:94px" width="14" height="14" viewBox="0 0 14 14"><path d="M2 1 V5 M2 3 H7 V8 M7 7 H10" stroke="#1E1E1E" stroke-width="1.2" fill="none"/><rect x="0.5" y="0" width="3" height="3" fill="#1E1E1E"/><rect x="5" y="5" width="4" height="4" fill="#1E1E1E"/><rect x="9" y="9" width="5" height="5" fill="#1E1E1E"/></svg>
<svg style="left:1490px;top:99px" width="6" height="4"><path d="M0.3 0.3 H5.7 L3 3.3Z" fill="#424242"/></svg>
<div style="position:absolute;left:1501px;top:93px;width:1px;height:17px;background:#CCCEDB;"></div>
<svg style="left:1509px;top:94px" width="14" height="14" viewBox="0 0 14 14"><path d="M1.5 12.5 L7 7" stroke="#1E1E1E" stroke-width="2.6"/><path d="M6 5.5 A4 4 0 0 1 12.5 1.5 L10 4 L11 5 L13.5 2.5 A4 4 0 0 1 9 8.5Z" fill="#1E1E1E"/></svg>
<div style="position:absolute;left:1526px;top:91px;width:20px;height:20px;background:#F3F3F6;border:1.5px solid #2A7BC0;box-sizing:border-box;"></div>
<div style="position:absolute;left:1534px;top:100px;width:9px;height:3px;background:#1E1E1E;"></div>
<div style="position:absolute;left:1529px;top:102px;width:6px;height:1px;background:#1E1E1E;"></div>
<div style="position:absolute;left:1270px;top:116px;width:428px;height:19px;background:#FFFFFF;border:1px solid #CCCEDB;box-sizing:border-box;"></div>
<div class="t" style="left:1275px;top:120.02px;font-size:11.2px;color:#717171;letter-spacing:-0.344px;">Search Solution Explorer (Ctrl+;)</div>
<svg style="left:1673px;top:119px" width="12" height="12" viewBox="0 0 12 12"><circle cx="7.5" cy="4.5" r="3.4" fill="none" stroke="#1E1E1E" stroke-width="1.4"/><path d="M5 7 L1 11" stroke="#1E1E1E" stroke-width="1.8"/></svg>
<svg style="left:1689px;top:123px" width="6" height="4"><path d="M0.3 0.3 H5.7 L3 3.3Z" fill="#424242"/></svg>
<div style="position:absolute;left:1270px;top:136px;width:427px;height:860px;overflow:hidden;">
<svg style="left:57.3px;top:6.9px" width="6" height="7.4" viewBox="0 0 6 7.4"><path d="M0.8 0.7 L4.9 3.7 L0.8 6.7Z" fill="none" stroke="#1E1E1E" stroke-width="1.3"/></svg>
<svg style="left:69.8px;top:7.4px" width="4.6" height="6.4" viewBox="0 0 4.6 6.4"><path d="M1 2.6 V1.7 A1.3 1.3 0 0 1 3.6 1.7 V2.6" stroke="#7DBDEB" fill="none" stroke-width="0.9"/><rect x="0" y="2.6" width="4.6" height="3.8" fill="#3E9DE0"/><rect x="1.7" y="3.5" width="1.2" height="1.6" fill="#CFE6F7"/></svg>
<svg style="left:77.5px;top:4.5px" width="14" height="12" viewBox="0 0 14 12"><rect x="0.5" y="0.5" width="13" height="11" fill="#fff" stroke="#424242"/><path d="M0.5 11.5 H13.5" stroke="#388A34" stroke-width="1.5"/><text x="2" y="8.5" font-family="Liberation Sans" font-weight="bold" font-size="7.5" fill="#1E1E1E">C#</text></svg>
<div class="t" style="left:96.0px;top:5.62px;font-size:11.2px;color:#1E1E1E;letter-spacing:-0.270px;">Identity.Admin.EntityFramework.MySql</div>
<svg style="left:57.3px;top:23.7px" width="6" height="7.4" viewBox="0 0 6 7.4"><path d="M0.8 0.7 L4.9 3.7 L0.8 6.7Z" fill="none" stroke="#1E1E1E" stroke-width="1.3"/></svg>
<svg style="left:69.8px;top:24.2px" width="4.6" height="6.4" viewBox="0 0 4.6 6.4"><path d="M1 2.6 V1.7 A1.3 1.3 0 0 1 3.6 1.7 V2.6" stroke="#7DBDEB" fill="none" stroke-width="0.9"/><rect x="0" y="2.6" width="4.6" height="3.8" fill="#3E9DE0"/><rect x="1.7" y="3.5" width="1.2" height="1.6" fill="#CFE6F7"/></svg>
<svg style="left:77.5px;top:21.3px" width="14" height="12" viewBox="0 0 14 12"><rect x="0.5" y="0.5" width="13" height="11" fill="#fff" stroke="#424242"/><path d="M0.5 11.5 H13.5" stroke="#388A34" stroke-width="1.5"/><text x="2" y="8.5" font-family="Liberation Sans" font-weight="bold" font-size="7.5" fill="#1E1E1E">C#</text></svg>
<div class="t" style="left:96.0px;top:22.42px;font-size:11.2px;color:#1E1E1E;letter-spacing:-0.346px;">Identity.Admin.EntityFramework.PostgreSQL</div>
<svg style="left:57.3px;top:40.5px" width="6" height="7.4" viewBox="0 0 6 7.4"><path d="M0.8 0.7 L4.9 3.7 L0.8 6.7Z" fill="none" stroke="#1E1E1E" stroke-width="1.3"/></svg>
<svg style="left:69.8px;top:41.0px" width="4.6" height="6.4" viewBox="0 0 4.6 6.4"><path d="M1 2.6 V1.7 A1.3 1.3 0 0 1 3.6 1.7 V2.6" stroke="#7DBDEB" fill="none" stroke-width="0.9"/><rect x="0" y="2.6" width="4.6" height="3.8" fill="#3E9DE0"/><rect x="1.7" y="3.5" width="1.2" height="1.6" fill="#CFE6F7"/></svg>
<svg style="left:77.5px;top:38.1px" width="14" height="12" viewBox="0 0 14 12"><rect x="0.5" y="0.5" width="13" height="11" fill="#fff" stroke="#424242"/><path d="M0.5 11.5 H13.5" stroke="#388A34" stroke-width="1.5"/><text x="2" y="8.5" font-family="Liberation Sans" font-weight="bold" font-size="7.5" fill="#1E1E1E">C#</text></svg>
<div class="t" style="left:96.0px;top:39.22px;font-size:11.2px;color:#1E1E1E;letter-spacing:-0.298px;">Identity.Admin.EntityFramework.Shared</div>
<svg style="left:57.3px;top:57.3px" width="6" height="7.4" viewBox="0 0 6 7.4"><path d="M0.8 0.7 L4.9 3.7 L0.8 6.7Z" fill="none" stroke="#1E1E1E" stroke-width="1.3"/></svg>
<svg style="left:69.8px;top:57.8px" width="4.6" height="6.4" viewBox="0 0 4.6 6.4"><path d="M1 2.6 V1.7 A1.3 1.3 0 0 1 3.6 1.7 V2.6" stroke="#7DBDEB" fill="none" stroke-width="0.9"/><rect x="0" y="2.6" width="4.6" height="3.8" fill="#3E9DE0"/><rect x="1.7" y="3.5" width="1.2" height="1.6" fill="#CFE6F7"/></svg>
<svg style="left:77.5px;top:54.9px" width="14" height="12" viewBox="0 0 14 12"><rect x="0.5" y="0.5" width="13" height="11" fill="#fff" stroke="#424242"/><path d="M0.5 11.5 H13.5" stroke="#388A34" stroke-width="1.5"/><text x="2" y="8.5" font-family="Liberation Sans" font-weight="bold" font-size="7.5" fill="#1E1E1E">C#</text></svg>
<div class="t" style="left:96.0px;top:56.02px;font-size:11.2px;color:#1E1E1E;letter-spacing:-0.326px;">Identity.Admin.EntityFramework.SqlServer</div>
<svg style="left:57.3px;top:74.1px" width="6" height="7.4" viewBox="0 0 6 7.4"><path d="M0.8 0.7 L4.9 3.7 L0.8 6.7Z" fill="none" stroke="#1E1E1E" stroke-width="1.3"/></svg>
<svg style="left:69.8px;top:74.6px" width="4.6" height="6.4" viewBox="0 0 4.6 6.4"><path d="M1 2.6 V1.7 A1.3 1.3 0 0 1 3.6 1.7 V2.6" stroke="#7DBDEB" fill="none" stroke-width="0.9"/><rect x="0" y="2.6" width="4.6" height="3.8" fill="#3E9DE0"/><rect x="1.7" y="3.5" width="1.2" height="1.6" fill="#CFE6F7"/></svg>
<svg style="left:77.5px;top:71.7px" width="14" height="12" viewBox="0 0 14 12"><rect x="0.5" y="0.5" width="13" height="11" fill="#fff" stroke="#424242"/><path d="M0.5 11.5 H13.5" stroke="#388A34" stroke-width="1.5"/><text x="2" y="8.5" font-family="Liberation Sans" font-weight="bold" font-size="7.5" fill="#1E1E1E">C#</text></svg>
<div class="t" style="left:96.0px;top:72.82px;font-size:11.2px;color:#1E1E1E;letter-spacing:-0.123px;">Identity.Admin.UI</div>
<svg style="left:57.3px;top:90.9px" width="6" height="7.4" viewBox="0 0 6 7.4"><path d="M0.8 0.7 L4.9 3.7 L0.8 6.7Z" fill="none" stroke="#1E1E1E" stroke-width="1.3"/></svg>
<svg style="left:69.8px;top:91.4px" width="4.6" height="6.4" viewBox="0 0 4.6 6.4"><path d="M1 2.6 V1.7 A1.3 1.3 0 0 1 3.6 1.7 V2.6" stroke="#7DBDEB" fill="none" stroke-width="0.9"/><rect x="0" y="2.6" width="4.6" height="3.8" fill="#3E9DE0"/><rect x="1.7" y="3.5" width="1.2" height="1.6" fill="#CFE6F7"/></svg>
<svg style="left:77.5px;top:88.5px" width="14" height="12" viewBox="0 0 14 12"><rect x="0.5" y="0.5" width="13" height="11" fill="#fff" stroke="#424242"/><path d="M0.5 11.5 H13.5" stroke="#388A34" stroke-width="1.5"/><text x="2" y="8.5" font-family="Liberation Sans" font-weight="bold" font-size="7.5" fill="#1E1E1E">C#</text></svg>
<div class="t" style="left:96.0px;top:89.62px;font-size:11.2px;color:#1E1E1E;letter-spacing:-0.225px;">Identity.Shared</div>
<svg style="left:57.3px;top:107.7px" width="6" height="7.4" viewBox="0 0 6 7.4"><path d="M0.8 0.7 L4.9 3.7 L0.8 6.7Z" fill="none" stroke="#1E1E1E" stroke-width="1.3"/></svg>
<svg style="left:69.8px;top:108.2px" width="4.6" height="6.4" viewBox="0 0 4.6 6.4"><path d="M1 2.6 V1.7 A1.3 1.3 0 0 1 3.6 1.7 V2.6" stroke="#7DBDEB" fill="none" stroke-width="0.9"/><rect x="0" y="2.6" width="4.6" height="3.8" fill="#3E9DE0"/><rect x="1.7" y="3.5" width="1.2" height="1.6" fill="#CFE6F7"/></svg>
<svg style="left:77.5px;top:105.3px" width="14" height="12" viewBox="0 0 14 12"><rect x="0.5" y="0.5" width="13" height="11" fill="#fff" stroke="#424242"/><path d="M0.5 11.5 H13.5" stroke="#388A34" stroke-width="1.5"/><text x="2" y="8.5" font-family="Liberation Sans" font-weight="bold" font-size="7.5" fill="#1E1E1E">C#</text></svg>
<div class="t" style="left:96.0px;top:106.42px;font-size:11.2px;color:#1E1E1E;letter-spacing:-0.192px;">Identity.Shared.Configuration</div>
<svg style="left:57.3px;top:124.5px" width="6" height="7.4" viewBox="0 0 6 7.4"><path d="M0.8 0.7 L4.9 3.7 L0.8 6.7Z" fill="none" stroke="#1E1E1E" stroke-width="1.3"/></svg>
<svg style="left:69.8px;top:125.0px" width="4.6" height="6.4" viewBox="0 0 4.6 6.4"><path d="M1 2.6 V1.7 A1.3 1.3 0 0 1 3.6 1.7 V2.6" stroke="#7DBDEB" fill="none" stroke-width="0.9"/><rect x="0" y="2.6" width="4.6" height="3.8" fill="#3E9DE0"/><rect x="1.7" y="3.5" width="1.2" height="1.6" fill="#CFE6F7"/></svg>
<svg style="left:77.5px;top:121.1px" width="14" height="13" viewBox="0 0 14 13"><rect x="2.5" y="0.5" width="11" height="11" fill="#fff" stroke="#424242"/><rect x="2.5" y="0.5" width="11" height="2" fill="#424242"/><circle cx="5" cy="8.5" r="4" fill="#1BA1E2"/><path d="M1 8.5 H9 M5 4.5 V12.5" stroke="#fff" stroke-width="0.7"/></svg>
<div class="t" style="left:96.0px;top:123.22px;font-size:11.2px;color:#1E1E1E;letter-spacing:-0.282px;">Identity.STS.Identity</div>
<svg style="left:25.0px;top:141.7px" width="6" height="6" viewBox="0 0 6 6"><path d="M6 0 V6 H0Z" fill="#1E1E1E"/></svg>
<svg style="left:44.5px;top:138.9px" width="15" height="12" viewBox="0 0 15 12"><path d="M0.5 1 H5.5 L7 2.5 H12.5 V5 H3.5 L0.5 11.5Z" fill="#F5E6C8" stroke="#DCB67A"/><path d="M3.5 5 H14.5 L11.5 11.5 H0.5Z" fill="#EBD5A8" stroke="#DCB67A"/></svg>
<div class="t" style="left:63.0px;top:140.02px;font-size:11.2px;color:#1E1E1E;letter-spacing:-0.329px;">WebApps</div>
<svg style="left:41.5px;top:158.5px" width="6" height="6" viewBox="0 0 6 6"><path d="M6 0 V6 H0Z" fill="#1E1E1E"/></svg>
<svg style="left:53.3px;top:158.6px" width="4.6" height="6.4" viewBox="0 0 4.6 6.4"><path d="M1 2.6 V1.7 A1.3 1.3 0 0 1 3.6 1.7 V2.6" stroke="#7DBDEB" fill="none" stroke-width="0.9"/><rect x="0" y="2.6" width="4.6" height="3.8" fill="#3E9DE0"/><rect x="1.7" y="3.5" width="1.2" height="1.6" fill="#CFE6F7"/></svg>
<svg style="left:61.0px;top:154.7px" width="14" height="13" viewBox="0 0 14 13"><rect x="2.5" y="0.5" width="11" height="11" fill="#fff" stroke="#424242"/><rect x="2.5" y="0.5" width="11" height="2" fill="#424242"/><circle cx="5" cy="8.5" r="4" fill="#1BA1E2"/><path d="M1 8.5 H9 M5 4.5 V12.5" stroke="#fff" stroke-width="0.7"/></svg>
<div class="t" style="left:79.5px;top:156.82px;font-size:11.2px;color:#1E1E1E;letter-spacing:-0.164px;font-weight:bold;">AdminApp</div>
<svg style="left:77.5px;top:172.5px" width="14" height="12" viewBox="0 0 14 12"><path d="M3.5 9.5 A3 3 0 0 1 3 3.5 A4 4 0 0 1 10.5 3 A3.2 3.2 0 0 1 10.5 9.5" fill="none" stroke="#424242" stroke-width="1.1"/><circle cx="7" cy="7.5" r="2.3" fill="none" stroke="#424242" stroke-width="1.1"/><path d="M7 9.8 V12" stroke="#424242"/></svg>
<div class="t" style="left:96.0px;top:173.62px;font-size:11.2px;color:#1E1E1E;letter-spacing:-0.492px;">Connected Services</div>
<svg style="left:57.3px;top:191.7px" width="6" height="7.4" viewBox="0 0 6 7.4"><path d="M0.8 0.7 L4.9 3.7 L0.8 6.7Z" fill="none" stroke="#1E1E1E" stroke-width="1.3"/></svg>
<svg style="left:77.5px;top:189.3px" width="14" height="12" viewBox="0 0 14 12"><rect x="0" y="7" width="3.5" height="3.5" fill="#1E1E1E"/><rect x="5" y="4" width="3.5" height="3.5" fill="#1E1E1E"/><rect x="9.5" y="0.5" width="3.5" height="3.5" fill="#1E1E1E"/><rect x="5" y="8.5" width="3.5" height="3.5" fill="#1E1E1E"/><path d="M3.5 8.5 H5 M8.5 5.5 H11 V4" stroke="#1E1E1E"/></svg>
<div class="t" style="left:96.0px;top:190.42px;font-size:11.2px;color:#1E1E1E;letter-spacing:-0.427px;">Dependencies</div>
<svg style="left:57.3px;top:208.5px" width="6" height="7.4" viewBox="0 0 6 7.4"><path d="M0.8 0.7 L4.9 3.7 L0.8 6.7Z" fill="none" stroke="#1E1E1E" stroke-width="1.3"/></svg>
<svg style="left:69.8px;top:209.0px" width="4.6" height="6.4" viewBox="0 0 4.6 6.4"><path d="M1 2.6 V1.7 A1.3 1.3 0 0 1 3.6 1.7 V2.6" stroke="#7DBDEB" fill="none" stroke-width="0.9"/><rect x="0" y="2.6" width="4.6" height="3.8" fill="#3E9DE0"/><rect x="1.7" y="3.5" width="1.2" height="1.6" fill="#CFE6F7"/></svg>
<svg style="left:77.5px;top:206.1px" width="14" height="13" viewBox="0 0 14 13"><path d="M2 1 H6.5 L8 2.5 H13.5 V11.5 H2Z" fill="#DCB67A"/><path d="M1 5 L2.5 7 L4 5 M2.5 7 V12" stroke="#1E1E1E" stroke-width="1.1" fill="none"/></svg>
<div class="t" style="left:96.0px;top:207.22px;font-size:11.2px;color:#1E1E1E;letter-spacing:-0.324px;">Properties</div>
<svg style="left:57.3px;top:225.3px" width="6" height="7.4" viewBox="0 0 6 7.4"><path d="M0.8 0.7 L4.9 3.7 L0.8 6.7Z" fill="none" stroke="#1E1E1E" stroke-width="1.3"/></svg>
<svg style="left:69.8px;top:225.8px" width="4.6" height="6.4" viewBox="0 0 4.6 6.4"><path d="M1 2.6 V1.7 A1.3 1.3 0 0 1 3.6 1.7 V2.6" stroke="#7DBDEB" fill="none" stroke-width="0.9"/><rect x="0" y="2.6" width="4.6" height="3.8" fill="#3E9DE0"/><rect x="1.7" y="3.5" width="1.2" height="1.6" fill="#CFE6F7"/></svg>
<svg style="left:77.5px;top:221.9px" width="14" height="14" viewBox="0 0 14 14"><circle cx="7" cy="7" r="6" fill="none" stroke="#1E1E1E" stroke-width="1.1"/><ellipse cx="7" cy="7" rx="2.6" ry="6" fill="none" stroke="#1E1E1E" stroke-width="1"/><path d="M1 7 H13 M2 4 H12 M2 10 H12" stroke="#1E1E1E" stroke-width="0.9"/></svg>
<div class="t" style="left:96.0px;top:224.02px;font-size:11.2px;color:#1E1E1E;letter-spacing:-0.082px;">wwwroot</div>
<svg style="left:57.3px;top:242.1px" width="6" height="7.4" viewBox="0 0 6 7.4"><path d="M0.8 0.7 L4.9 3.7 L0.8 6.7Z" fill="none" stroke="#1E1E1E" stroke-width="1.3"/></svg>
<svg style="left:69.8px;top:242.6px" width="4.6" height="6.4" viewBox="0 0 4.6 6.4"><path d="M1 2.6 V1.7 A1.3 1.3 0 0 1 3.6 1.7 V2.6" stroke="#7DBDEB" fill="none" stroke-width="0.9"/><rect x="0" y="2.6" width="4.6" height="3.8" fill="#3E9DE0"/><rect x="1.7" y="3.5" width="1.2" height="1.6" fill="#CFE6F7"/></svg>
<svg style="left:77.5px;top:239.7px" width="14" height="12" viewBox="0 0 14 12"><path d="M0.5 1 H5.5 L7 2.5 H13.5 V11.5 H0.5Z" fill="#DCB67A"/><path d="M0.5 3.5 H13.5" stroke="#EBD5A8" stroke-width="0.8"/></svg>
<div class="t" style="left:96.0px;top:240.82px;font-size:11.2px;color:#1E1E1E;letter-spacing:-0.319px;">Components</div>
<svg style="left:57.3px;top:258.9px" width="6" height="7.4" viewBox="0 0 6 7.4"><path d="M0.8 0.7 L4.9 3.7 L0.8 6.7Z" fill="none" stroke="#1E1E1E" stroke-width="1.3"/></svg>
<svg style="left:69.8px;top:259.4px" width="4.6" height="6.4" viewBox="0 0 4.6 6.4"><path d="M1 2.6 V1.7 A1.3 1.3 0 0 1 3.6 1.7 V2.6" stroke="#7DBDEB" fill="none" stroke-width="0.9"/><rect x="0" y="2.6" width="4.6" height="3.8" fill="#3E9DE0"/><rect x="1.7" y="3.5" width="1.2" height="1.6" fill="#CFE6F7"/></svg>
<svg style="left:77.5px;top:256.5px" width="14" height="12" viewBox="0 0 14 12"><path d="M0.5 1 H5.5 L7 2.5 H13.5 V11.5 H0.5Z" fill="#DCB67A"/><path d="M0.5 3.5 H13.5" stroke="#EBD5A8" stroke-width="0.8"/></svg>
<div class="t" style="left:96.0px;top:257.62px;font-size:11.2px;color:#1E1E1E;letter-spacing:-0.494px;">Core</div>
<svg style="left:57.3px;top:275.7px" width="6" height="7.4" viewBox="0 0 6 7.4"><path d="M0.8 0.7 L4.9 3.7 L0.8 6.7Z" fill="none" stroke="#1E1E1E" stroke-width="1.3"/></svg>
<svg style="left:69.8px;top:276.2px" width="4.6" height="6.4" viewBox="0 0 4.6 6.4"><path d="M1 2.6 V1.7 A1.3 1.3 0 0 1 3.6 1.7 V2.6" stroke="#7DBDEB" fill="none" stroke-width="0.9"/><rect x="0" y="2.6" width="4.6" height="3.8" fill="#3E9DE0"/><rect x="1.7" y="3.5" width="1.2" height="1.6" fill="#CFE6F7"/></svg>
<svg style="left:77.5px;top:273.3px" width="14" height="12" viewBox="0 0 14 12"><path d="M0.5 1 H5.5 L7 2.5 H13.5 V11.5 H0.5Z" fill="#DCB67A"/><path d="M0.5 3.5 H13.5" stroke="#EBD5A8" stroke-width="0.8"/></svg>
<div class="t" style="left:96.0px;top:274.42px;font-size:11.2px;color:#1E1E1E;letter-spacing:-0.559px;">Features</div>
<svg style="left:57.3px;top:292.5px" width="6" height="7.4" viewBox="0 0 6 7.4"><path d="M0.8 0.7 L4.9 3.7 L0.8 6.7Z" fill="none" stroke="#1E1E1E" stroke-width="1.3"/></svg>
<svg style="left:69.8px;top:293.0px" width="4.6" height="6.4" viewBox="0 0 4.6 6.4"><path d="M1 2.6 V1.7 A1.3 1.3 0 0 1 3.6 1.7 V2.6" stroke="#7DBDEB" fill="none" stroke-width="0.9"/><rect x="0" y="2.6" width="4.6" height="3.8" fill="#3E9DE0"/><rect x="1.7" y="3.5" width="1.2" height="1.6" fill="#CFE6F7"/></svg>
<svg style="left:77.5px;top:290.1px" width="14" height="12" viewBox="0 0 14 12"><path d="M0.5 1 H5.5 L7 2.5 H13.5 V11.5 H0.5Z" fill="#DCB67A"/><path d="M0.5 3.5 H13.5" stroke="#EBD5A8" stroke-width="0.8"/></svg>
<div class="t" style="left:96.0px;top:291.22px;font-size:11.2px;color:#1E1E1E;letter-spacing:-0.214px;">Models</div>
<svg style="left:57.3px;top:309.3px" width="6" height="7.4" viewBox="0 0 6 7.4"><path d="M0.8 0.7 L4.9 3.7 L0.8 6.7Z" fill="none" stroke="#1E1E1E" stroke-width="1.3"/></svg>
<svg style="left:69.8px;top:309.8px" width="4.6" height="6.4" viewBox="0 0 4.6 6.4"><path d="M1 2.6 V1.7 A1.3 1.3 0 0 1 3.6 1.7 V2.6" stroke="#7DBDEB" fill="none" stroke-width="0.9"/><rect x="0" y="2.6" width="4.6" height="3.8" fill="#3E9DE0"/><rect x="1.7" y="3.5" width="1.2" height="1.6" fill="#CFE6F7"/></svg>
<svg style="left:77.5px;top:306.9px" width="14" height="12" viewBox="0 0 14 12"><path d="M0.5 1 H5.5 L7 2.5 H13.5 V11.5 H0.5Z" fill="#DCB67A"/><path d="M0.5 3.5 H13.5" stroke="#EBD5A8" stroke-width="0.8"/></svg>
<div class="t" style="left:96.0px;top:308.02px;font-size:11.2px;color:#1E1E1E;letter-spacing:-0.789px;">Pages</div>
<svg style="left:57.3px;top:326.1px" width="6" height="7.4" viewBox="0 0 6 7.4"><path d="M0.8 0.7 L4.9 3.7 L0.8 6.7Z" fill="none" stroke="#1E1E1E" stroke-width="1.3"/></svg>
<svg style="left:69.8px;top:326.6px" width="4.6" height="6.4" viewBox="0 0 4.6 6.4"><path d="M1 2.6 V1.7 A1.3 1.3 0 0 1 3.6 1.7 V2.6" stroke="#7DBDEB" fill="none" stroke-width="0.9"/><rect x="0" y="2.6" width="4.6" height="3.8" fill="#3E9DE0"/><rect x="1.7" y="3.5" width="1.2" height="1.6" fill="#CFE6F7"/></svg>
<svg style="left:77.5px;top:323.7px" width="14" height="12" viewBox="0 0 14 12"><path d="M0.5 1 H5.5 L7 2.5 H13.5 V11.5 H0.5Z" fill="#DCB67A"/><path d="M0.5 3.5 H13.5" stroke="#EBD5A8" stroke-width="0.8"/></svg>
<div class="t" style="left:96.0px;top:324.82px;font-size:11.2px;color:#1E1E1E;letter-spacing:-0.673px;">Services</div>
<svg style="left:57.3px;top:342.9px" width="6" height="7.4" viewBox="0 0 6 7.4"><path d="M0.8 0.7 L4.9 3.7 L0.8 6.7Z" fill="none" stroke="#1E1E1E" stroke-width="1.3"/></svg>
<svg style="left:69.8px;top:343.4px" width="4.6" height="6.4" viewBox="0 0 4.6 6.4"><path d="M1 2.6 V1.7 A1.3 1.3 0 0 1 3.6 1.7 V2.6" stroke="#7DBDEB" fill="none" stroke-width="0.9"/><rect x="0" y="2.6" width="4.6" height="3.8" fill="#3E9DE0"/><rect x="1.7" y="3.5" width="1.2" height="1.6" fill="#CFE6F7"/></svg>
<svg style="left:77.5px;top:340.5px" width="14" height="12" viewBox="0 0 14 12"><path d="M0.5 1 H5.5 L7 2.5 H13.5 V11.5 H0.5Z" fill="#DCB67A"/><path d="M0.5 3.5 H13.5" stroke="#EBD5A8" stroke-width="0.8"/></svg>
<div class="t" style="left:96.0px;top:341.62px;font-size:11.2px;color:#1E1E1E;letter-spacing:-0.562px;">Shared</div>
<svg style="left:57.3px;top:359.7px" width="6" height="7.4" viewBox="0 0 6 7.4"><path d="M0.8 0.7 L4.9 3.7 L0.8 6.7Z" fill="none" stroke="#1E1E1E" stroke-width="1.3"/></svg>
<svg style="left:69.8px;top:360.2px" width="4.6" height="6.4" viewBox="0 0 4.6 6.4"><path d="M1 2.6 V1.7 A1.3 1.3 0 0 1 3.6 1.7 V2.6" stroke="#7DBDEB" fill="none" stroke-width="0.9"/><rect x="0" y="2.6" width="4.6" height="3.8" fill="#3E9DE0"/><rect x="1.7" y="3.5" width="1.2" height="1.6" fill="#CFE6F7"/></svg>
<svg style="left:77.5px;top:357.3px" width="14" height="12" viewBox="0 0 14 12"><path d="M0.5 1 H5.5 L7 2.5 H13.5 V11.5 H0.5Z" fill="#DCB67A"/><path d="M0.5 3.5 H13.5" stroke="#EBD5A8" stroke-width="0.8"/></svg>
<div class="t" style="left:96.0px;top:358.42px;font-size:11.2px;color:#1E1E1E;letter-spacing:-0.592px;">Theme</div>
<svg style="left:69.8px;top:377.0px" width="4.6" height="6.4" viewBox="0 0 4.6 6.4"><path d="M1 2.6 V1.7 A1.3 1.3 0 0 1 3.6 1.7 V2.6" stroke="#7DBDEB" fill="none" stroke-width="0.9"/><rect x="0" y="2.6" width="4.6" height="3.8" fill="#3E9DE0"/><rect x="1.7" y="3.5" width="1.2" height="1.6" fill="#CFE6F7"/></svg>
<svg style="left:77.5px;top:373.1px" width="12" height="14" viewBox="0 0 12 14"><path d="M1 0.5 H8 L11 3.5 V13.5 H1Z" fill="#fff" stroke="#424242"/><circle cx="6" cy="8" r="2.5" fill="none" stroke="#707070" stroke-width="0.9"/><circle cx="6" cy="8" r="1" fill="#707070"/></svg>
<div class="t" style="left:96.0px;top:375.22px;font-size:11.2px;color:#1E1E1E;letter-spacing:-0.370px;">_Imports.razor</div>
<svg style="left:69.8px;top:393.8px" width="4.6" height="6.4" viewBox="0 0 4.6 6.4"><path d="M1 2.6 V1.7 A1.3 1.3 0 0 1 3.6 1.7 V2.6" stroke="#7DBDEB" fill="none" stroke-width="0.9"/><rect x="0" y="2.6" width="4.6" height="3.8" fill="#3E9DE0"/><rect x="1.7" y="3.5" width="1.2" height="1.6" fill="#CFE6F7"/></svg>
<svg style="left:77.5px;top:389.9px" width="12" height="14" viewBox="0 0 12 14"><path d="M1 0.5 H8 L11 3.5 V13.5 H1Z" fill="#fff" stroke="#424242"/><circle cx="6" cy="8" r="2.5" fill="none" stroke="#707070" stroke-width="0.9"/><circle cx="6" cy="8" r="1" fill="#707070"/></svg>
<div class="t" style="left:96.0px;top:392.02px;font-size:11.2px;color:#1E1E1E;letter-spacing:-0.291px;">App.razor</div>
<div style="position:absolute;left:0px;top:403.80000000000007px;width:413px;height:16.7px;background:#CFCFD7;"></div>
<svg style="left:57.3px;top:410.1px" width="6" height="7.4" viewBox="0 0 6 7.4"><path d="M0.8 0.7 L4.9 3.7 L0.8 6.7Z" fill="none" stroke="#1E1E1E" stroke-width="1.3"/></svg>
<svg style="left:68.0px;top:409.7px" width="7" height="8" viewBox="0 0 7 8"><path d="M0.5 4 L2.5 7 L6.5 0.5" stroke="#E51400" stroke-width="1.3" fill="none"/></svg>
<svg style="left:77.5px;top:407.7px" width="14" height="12" viewBox="0 0 14 12"><path d="M8 4.2 Q7.3 3 5.6 3 Q3.2 3 3.2 6.4 Q3.2 9.8 5.6 9.8 Q7.3 9.8 8 8.6" fill="none" stroke="#2E8B2E" stroke-width="1.7"/><path d="M9.4 3.8 H13.2 M9.4 5.8 H13.2 M10.6 2.6 L10.2 7 M12.4 2.6 L12 7" stroke="#1F3F1F" stroke-width="0.9"/></svg>
<div class="t" style="left:96.0px;top:408.82px;font-size:11.2px;color:#1E1E1E;letter-spacing:-0.475px;">Program.cs</div>
<svg style="left:41.5px;top:427.3px" width="6" height="6" viewBox="0 0 6 6"><path d="M6 0 V6 H0Z" fill="#1E1E1E"/></svg>
<svg style="left:53.3px;top:427.4px" width="4.6" height="6.4" viewBox="0 0 4.6 6.4"><path d="M1 2.6 V1.7 A1.3 1.3 0 0 1 3.6 1.7 V2.6" stroke="#7DBDEB" fill="none" stroke-width="0.9"/><rect x="0" y="2.6" width="4.6" height="3.8" fill="#3E9DE0"/><rect x="1.7" y="3.5" width="1.2" height="1.6" fill="#CFE6F7"/></svg>
<svg style="left:61.0px;top:423.5px" width="14" height="13" viewBox="0 0 14 13"><rect x="2.5" y="0.5" width="11" height="11" fill="#fff" stroke="#424242"/><rect x="2.5" y="0.5" width="11" height="2" fill="#424242"/><circle cx="5" cy="8.5" r="4" fill="#1BA1E2"/><path d="M1 8.5 H9 M5 4.5 V12.5" stroke="#fff" stroke-width="0.7"/></svg>
<div class="t" style="left:79.5px;top:425.62px;font-size:11.2px;color:#1E1E1E;letter-spacing:-0.237px;">PortalApp</div>
<svg style="left:77.5px;top:441.3px" width="14" height="12" viewBox="0 0 14 12"><path d="M3.5 9.5 A3 3 0 0 1 3 3.5 A4 4 0 0 1 10.5 3 A3.2 3.2 0 0 1 10.5 9.5" fill="none" stroke="#424242" stroke-width="1.1"/><circle cx="7" cy="7.5" r="2.3" fill="none" stroke="#424242" stroke-width="1.1"/><path d="M7 9.8 V12" stroke="#424242"/></svg>
<div class="t" style="left:96.0px;top:442.42px;font-size:11.2px;color:#1E1E1E;letter-spacing:-0.492px;">Connected Services</div>
<svg style="left:57.3px;top:460.5px" width="6" height="7.4" viewBox="0 0 6 7.4"><path d="M0.8 0.7 L4.9 3.7 L0.8 6.7Z" fill="none" stroke="#1E1E1E" stroke-width="1.3"/></svg>
<svg style="left:77.5px;top:458.1px" width="14" height="12" viewBox="0 0 14 12"><rect x="0" y="7" width="3.5" height="3.5" fill="#1E1E1E"/><rect x="5" y="4" width="3.5" height="3.5" fill="#1E1E1E"/><rect x="9.5" y="0.5" width="3.5" height="3.5" fill="#1E1E1E"/><rect x="5" y="8.5" width="3.5" height="3.5" fill="#1E1E1E"/><path d="M3.5 8.5 H5 M8.5 5.5 H11 V4" stroke="#1E1E1E"/></svg>
<div class="t" style="left:96.0px;top:459.22px;font-size:11.2px;color:#1E1E1E;letter-spacing:-0.427px;">Dependencies</div>
<svg style="left:57.3px;top:477.3px" width="6" height="7.4" viewBox="0 0 6 7.4"><path d="M0.8 0.7 L4.9 3.7 L0.8 6.7Z" fill="none" stroke="#1E1E1E" stroke-width="1.3"/></svg>
<svg style="left:69.8px;top:477.8px" width="4.6" height="6.4" viewBox="0 0 4.6 6.4"><path d="M1 2.6 V1.7 A1.3 1.3 0 0 1 3.6 1.7 V2.6" stroke="#7DBDEB" fill="none" stroke-width="0.9"/><rect x="0" y="2.6" width="4.6" height="3.8" fill="#3E9DE0"/><rect x="1.7" y="3.5" width="1.2" height="1.6" fill="#CFE6F7"/></svg>
<svg style="left:77.5px;top:474.9px" width="14" height="13" viewBox="0 0 14 13"><path d="M2 1 H6.5 L8 2.5 H13.5 V11.5 H2Z" fill="#DCB67A"/><path d="M1 5 L2.5 7 L4 5 M2.5 7 V12" stroke="#1E1E1E" stroke-width="1.1" fill="none"/></svg>
<div class="t" style="left:96.0px;top:476.02px;font-size:11.2px;color:#1E1E1E;letter-spacing:-0.324px;">Properties</div>
<svg style="left:57.3px;top:494.1px" width="6" height="7.4" viewBox="0 0 6 7.4"><path d="M0.8 0.7 L4.9 3.7 L0.8 6.7Z" fill="none" stroke="#1E1E1E" stroke-width="1.3"/></svg>
<svg style="left:69.8px;top:494.6px" width="4.6" height="6.4" viewBox="0 0 4.6 6.4"><path d="M1 2.6 V1.7 A1.3 1.3 0 0 1 3.6 1.7 V2.6" stroke="#7DBDEB" fill="none" stroke-width="0.9"/><rect x="0" y="2.6" width="4.6" height="3.8" fill="#3E9DE0"/><rect x="1.7" y="3.5" width="1.2" height="1.6" fill="#CFE6F7"/></svg>
<svg style="left:77.5px;top:490.7px" width="14" height="14" viewBox="0 0 14 14"><circle cx="7" cy="7" r="6" fill="none" stroke="#1E1E1E" stroke-width="1.1"/><ellipse cx="7" cy="7" rx="2.6" ry="6" fill="none" stroke="#1E1E1E" stroke-width="1"/><path d="M1 7 H13 M2 4 H12 M2 10 H12" stroke="#1E1E1E" stroke-width="0.9"/></svg>
<div class="t" style="left:96.0px;top:492.82px;font-size:11.2px;color:#1E1E1E;letter-spacing:-0.082px;">wwwroot</div>
<svg style="left:58.0px;top:511.3px" width="6" height="6" viewBox="0 0 6 6"><path d="M6 0 V6 H0Z" fill="#1E1E1E"/></svg>
<svg style="left:69.8px;top:511.4px" width="4.6" height="6.4" viewBox="0 0 4.6 6.4"><path d="M1 2.6 V1.7 A1.3 1.3 0 0 1 3.6 1.7 V2.6" stroke="#7DBDEB" fill="none" stroke-width="0.9"/><rect x="0" y="2.6" width="4.6" height="3.8" fill="#3E9DE0"/><rect x="1.7" y="3.5" width="1.2" height="1.6" fill="#CFE6F7"/></svg>
<svg style="left:77.5px;top:508.5px" width="15" height="12" viewBox="0 0 15 12"><path d="M0.5 1 H5.5 L7 2.5 H12.5 V5 H3.5 L0.5 11.5Z" fill="#F5E6C8" stroke="#DCB67A"/><path d="M3.5 5 H14.5 L11.5 11.5 H0.5Z" fill="#EBD5A8" stroke="#DCB67A"/></svg>
<div class="t" style="left:96.0px;top:509.62px;font-size:11.2px;color:#1E1E1E;letter-spacing:-0.494px;">Core</div>
<svg style="left:73.8px;top:527.7px" width="6" height="7.4" viewBox="0 0 6 7.4"><path d="M0.8 0.7 L4.9 3.7 L0.8 6.7Z" fill="none" stroke="#1E1E1E" stroke-width="1.3"/></svg>
<svg style="left:86.3px;top:528.2px" width="4.6" height="6.4" viewBox="0 0 4.6 6.4"><path d="M1 2.6 V1.7 A1.3 1.3 0 0 1 3.6 1.7 V2.6" stroke="#7DBDEB" fill="none" stroke-width="0.9"/><rect x="0" y="2.6" width="4.6" height="3.8" fill="#3E9DE0"/><rect x="1.7" y="3.5" width="1.2" height="1.6" fill="#CFE6F7"/></svg>
<svg style="left:94.0px;top:525.3px" width="14" height="12" viewBox="0 0 14 12"><path d="M8 4.2 Q7.3 3 5.6 3 Q3.2 3 3.2 6.4 Q3.2 9.8 5.6 9.8 Q7.3 9.8 8 8.6" fill="none" stroke="#2E8B2E" stroke-width="1.7"/><path d="M9.4 3.8 H13.2 M9.4 5.8 H13.2 M10.6 2.6 L10.2 7 M12.4 2.6 L12 7" stroke="#1F3F1F" stroke-width="0.9"/></svg>
<div class="t" style="left:112.5px;top:526.42px;font-size:11.2px;color:#1E1E1E;letter-spacing:-0.510px;">Constants.cs</div>
<svg style="left:57.3px;top:544.5px" width="6" height="7.4" viewBox="0 0 6 7.4"><path d="M0.8 0.7 L4.9 3.7 L0.8 6.7Z" fill="none" stroke="#1E1E1E" stroke-width="1.3"/></svg>
<svg style="left:69.8px;top:545.0px" width="4.6" height="6.4" viewBox="0 0 4.6 6.4"><path d="M1 2.6 V1.7 A1.3 1.3 0 0 1 3.6 1.7 V2.6" stroke="#7DBDEB" fill="none" stroke-width="0.9"/><rect x="0" y="2.6" width="4.6" height="3.8" fill="#3E9DE0"/><rect x="1.7" y="3.5" width="1.2" height="1.6" fill="#CFE6F7"/></svg>
<svg style="left:77.5px;top:542.1px" width="14" height="12" viewBox="0 0 14 12"><path d="M0.5 1 H5.5 L7 2.5 H13.5 V11.5 H0.5Z" fill="#DCB67A"/><path d="M0.5 3.5 H13.5" stroke="#EBD5A8" stroke-width="0.8"/></svg>
<div class="t" style="left:96.0px;top:543.22px;font-size:11.2px;color:#1E1E1E;letter-spacing:-0.550px;">Extensions</div>
<svg style="left:58.0px;top:561.7px" width="6" height="6" viewBox="0 0 6 6"><path d="M6 0 V6 H0Z" fill="#1E1E1E"/></svg>
<svg style="left:69.8px;top:561.8px" width="4.6" height="6.4" viewBox="0 0 4.6 6.4"><path d="M1 2.6 V1.7 A1.3 1.3 0 0 1 3.6 1.7 V2.6" stroke="#7DBDEB" fill="none" stroke-width="0.9"/><rect x="0" y="2.6" width="4.6" height="3.8" fill="#3E9DE0"/><rect x="1.7" y="3.5" width="1.2" height="1.6" fill="#CFE6F7"/></svg>
<svg style="left:77.5px;top:558.9px" width="15" height="12" viewBox="0 0 15 12"><path d="M0.5 1 H5.5 L7 2.5 H12.5 V5 H3.5 L0.5 11.5Z" fill="#F5E6C8" stroke="#DCB67A"/><path d="M3.5 5 H14.5 L11.5 11.5 H0.5Z" fill="#EBD5A8" stroke="#DCB67A"/></svg>
<div class="t" style="left:96.0px;top:560.02px;font-size:11.2px;color:#1E1E1E;letter-spacing:-0.789px;">Pages</div>
<svg style="left:73.8px;top:578.1px" width="6" height="7.4" viewBox="0 0 6 7.4"><path d="M0.8 0.7 L4.9 3.7 L0.8 6.7Z" fill="none" stroke="#1E1E1E" stroke-width="1.3"/></svg>
<svg style="left:86.3px;top:578.6px" width="4.6" height="6.4" viewBox="0 0 4.6 6.4"><path d="M1 2.6 V1.7 A1.3 1.3 0 0 1 3.6 1.7 V2.6" stroke="#7DBDEB" fill="none" stroke-width="0.9"/><rect x="0" y="2.6" width="4.6" height="3.8" fill="#3E9DE0"/><rect x="1.7" y="3.5" width="1.2" height="1.6" fill="#CFE6F7"/></svg>
<svg style="left:94.0px;top:575.7px" width="14" height="12" viewBox="0 0 14 12"><path d="M0.5 1 H5.5 L7 2.5 H13.5 V11.5 H0.5Z" fill="#DCB67A"/><path d="M0.5 3.5 H13.5" stroke="#EBD5A8" stroke-width="0.8"/></svg>
<div class="t" style="left:112.5px;top:576.82px;font-size:11.2px;color:#1E1E1E;letter-spacing:-0.120px;">Auth</div>
<svg style="left:73.8px;top:594.9px" width="6" height="7.4" viewBox="0 0 6 7.4"><path d="M0.8 0.7 L4.9 3.7 L0.8 6.7Z" fill="none" stroke="#1E1E1E" stroke-width="1.3"/></svg>
<svg style="left:86.3px;top:595.4px" width="4.6" height="6.4" viewBox="0 0 4.6 6.4"><path d="M1 2.6 V1.7 A1.3 1.3 0 0 1 3.6 1.7 V2.6" stroke="#7DBDEB" fill="none" stroke-width="0.9"/><rect x="0" y="2.6" width="4.6" height="3.8" fill="#3E9DE0"/><rect x="1.7" y="3.5" width="1.2" height="1.6" fill="#CFE6F7"/></svg>
<svg style="left:94.0px;top:592.5px" width="14" height="12" viewBox="0 0 14 12"><path d="M0.5 1 H5.5 L7 2.5 H13.5 V11.5 H0.5Z" fill="#DCB67A"/><path d="M0.5 3.5 H13.5" stroke="#EBD5A8" stroke-width="0.8"/></svg>
<div class="t" style="left:112.5px;top:593.62px;font-size:11.2px;color:#1E1E1E;letter-spacing:-0.966px;">Exams</div>
<svg style="left:73.8px;top:611.7px" width="6" height="7.4" viewBox="0 0 6 7.4"><path d="M0.8 0.7 L4.9 3.7 L0.8 6.7Z" fill="none" stroke="#1E1E1E" stroke-width="1.3"/></svg>
<svg style="left:86.3px;top:612.2px" width="4.6" height="6.4" viewBox="0 0 4.6 6.4"><path d="M1 2.6 V1.7 A1.3 1.3 0 0 1 3.6 1.7 V2.6" stroke="#7DBDEB" fill="none" stroke-width="0.9"/><rect x="0" y="2.6" width="4.6" height="3.8" fill="#3E9DE0"/><rect x="1.7" y="3.5" width="1.2" height="1.6" fill="#CFE6F7"/></svg>
<svg style="left:94.0px;top:609.3px" width="14" height="12" viewBox="0 0 14 12"><path d="M0.5 1 H5.5 L7 2.5 H13.5 V11.5 H0.5Z" fill="#DCB67A"/><path d="M0.5 3.5 H13.5" stroke="#EBD5A8" stroke-width="0.8"/></svg>
<div class="t" style="left:112.5px;top:610.42px;font-size:11.2px;color:#1E1E1E;letter-spacing:-0.230px;">Profile</div>
<svg style="left:73.8px;top:628.5px" width="6" height="7.4" viewBox="0 0 6 7.4"><path d="M0.8 0.7 L4.9 3.7 L0.8 6.7Z" fill="none" stroke="#1E1E1E" stroke-width="1.3"/></svg>
<svg style="left:86.3px;top:629.0px" width="4.6" height="6.4" viewBox="0 0 4.6 6.4"><path d="M1 2.6 V1.7 A1.3 1.3 0 0 1 3.6 1.7 V2.6" stroke="#7DBDEB" fill="none" stroke-width="0.9"/><rect x="0" y="2.6" width="4.6" height="3.8" fill="#3E9DE0"/><rect x="1.7" y="3.5" width="1.2" height="1.6" fill="#CFE6F7"/></svg>
<svg style="left:94.0px;top:626.1px" width="14" height="12" viewBox="0 0 14 12"><path d="M0.5 1 H5.5 L7 2.5 H13.5 V11.5 H0.5Z" fill="#DCB67A"/><path d="M0.5 3.5 H13.5" stroke="#EBD5A8" stroke-width="0.8"/></svg>
<div class="t" style="left:112.5px;top:627.22px;font-size:11.2px;color:#1E1E1E;letter-spacing:-0.562px;">Shared</div>
<svg style="left:86.3px;top:645.8px" width="4.6" height="6.4" viewBox="0 0 4.6 6.4"><path d="M1 2.6 V1.7 A1.3 1.3 0 0 1 3.6 1.7 V2.6" stroke="#7DBDEB" fill="none" stroke-width="0.9"/><rect x="0" y="2.6" width="4.6" height="3.8" fill="#3E9DE0"/><rect x="1.7" y="3.5" width="1.2" height="1.6" fill="#CFE6F7"/></svg>
<svg style="left:94.0px;top:641.9px" width="12" height="14" viewBox="0 0 12 14"><path d="M1 0.5 H8 L11 3.5 V13.5 H1Z" fill="#fff" stroke="#424242"/><circle cx="6" cy="8" r="2.5" fill="none" stroke="#707070" stroke-width="0.9"/><circle cx="6" cy="8" r="1" fill="#707070"/></svg>
<div class="t" style="left:112.5px;top:644.02px;font-size:11.2px;color:#1E1E1E;letter-spacing:-0.355px;">_ViewImports.cshtml</div>
<svg style="left:86.3px;top:662.6px" width="4.6" height="6.4" viewBox="0 0 4.6 6.4"><path d="M1 2.6 V1.7 A1.3 1.3 0 0 1 3.6 1.7 V2.6" stroke="#7DBDEB" fill="none" stroke-width="0.9"/><rect x="0" y="2.6" width="4.6" height="3.8" fill="#3E9DE0"/><rect x="1.7" y="3.5" width="1.2" height="1.6" fill="#CFE6F7"/></svg>
<svg style="left:94.0px;top:658.7px" width="12" height="14" viewBox="0 0 12 14"><path d="M1 0.5 H8 L11 3.5 V13.5 H1Z" fill="#fff" stroke="#424242"/><circle cx="6" cy="8" r="2.5" fill="none" stroke="#707070" stroke-width="0.9"/><circle cx="6" cy="8" r="1" fill="#707070"/></svg>
<div class="t" style="left:112.5px;top:660.82px;font-size:11.2px;color:#1E1E1E;letter-spacing:-0.437px;">_ViewStart.cshtml</div>
<svg style="left:73.8px;top:678.9px" width="6" height="7.4" viewBox="0 0 6 7.4"><path d="M0.8 0.7 L4.9 3.7 L0.8 6.7Z" fill="none" stroke="#1E1E1E" stroke-width="1.3"/></svg>
<svg style="left:86.3px;top:679.4px" width="4.6" height="6.4" viewBox="0 0 4.6 6.4"><path d="M1 2.6 V1.7 A1.3 1.3 0 0 1 3.6 1.7 V2.6" stroke="#7DBDEB" fill="none" stroke-width="0.9"/><rect x="0" y="2.6" width="4.6" height="3.8" fill="#3E9DE0"/><rect x="1.7" y="3.5" width="1.2" height="1.6" fill="#CFE6F7"/></svg>
<svg style="left:94.0px;top:675.5px" width="12" height="14" viewBox="0 0 12 14"><path d="M1 0.5 H8 L11 3.5 V13.5 H1Z" fill="#fff" stroke="#424242"/><circle cx="6" cy="8" r="2.5" fill="none" stroke="#707070" stroke-width="0.9"/><circle cx="6" cy="8" r="1" fill="#707070"/></svg>
<div class="t" style="left:112.5px;top:677.62px;font-size:11.2px;color:#1E1E1E;letter-spacing:-0.308px;">Error.cshtml</div>
<svg style="left:73.8px;top:695.7px" width="6" height="7.4" viewBox="0 0 6 7.4"><path d="M0.8 0.7 L4.9 3.7 L0.8 6.7Z" fill="none" stroke="#1E1E1E" stroke-width="1.3"/></svg>
<svg style="left:86.3px;top:696.2px" width="4.6" height="6.4" viewBox="0 0 4.6 6.4"><path d="M1 2.6 V1.7 A1.3 1.3 0 0 1 3.6 1.7 V2.6" stroke="#7DBDEB" fill="none" stroke-width="0.9"/><rect x="0" y="2.6" width="4.6" height="3.8" fill="#3E9DE0"/><rect x="1.7" y="3.5" width="1.2" height="1.6" fill="#CFE6F7"/></svg>
<svg style="left:94.0px;top:692.3px" width="12" height="14" viewBox="0 0 12 14"><path d="M1 0.5 H8 L11 3.5 V13.5 H1Z" fill="#fff" stroke="#424242"/><circle cx="6" cy="8" r="2.5" fill="none" stroke="#707070" stroke-width="0.9"/><circle cx="6" cy="8" r="1" fill="#707070"/></svg>
<div class="t" style="left:112.5px;top:694.42px;font-size:11.2px;color:#1E1E1E;letter-spacing:-0.313px;">Index.cshtml</div>
<svg style="left:58.0px;top:712.9px" width="6" height="6" viewBox="0 0 6 6"><path d="M6 0 V6 H0Z" fill="#1E1E1E"/></svg>
<svg style="left:69.8px;top:713.0px" width="4.6" height="6.4" viewBox="0 0 4.6 6.4"><path d="M1 2.6 V1.7 A1.3 1.3 0 0 1 3.6 1.7 V2.6" stroke="#7DBDEB" fill="none" stroke-width="0.9"/><rect x="0" y="2.6" width="4.6" height="3.8" fill="#3E9DE0"/><rect x="1.7" y="3.5" width="1.2" height="1.6" fill="#CFE6F7"/></svg>
<svg style="left:77.5px;top:710.1px" width="15" height="12" viewBox="0 0 15 12"><path d="M0.5 1 H5.5 L7 2.5 H12.5 V5 H3.5 L0.5 11.5Z" fill="#F5E6C8" stroke="#DCB67A"/><path d="M3.5 5 H14.5 L11.5 11.5 H0.5Z" fill="#EBD5A8" stroke="#DCB67A"/></svg>
<div class="t" style="left:96.0px;top:711.22px;font-size:11.2px;color:#1E1E1E;letter-spacing:-0.673px;">Services</div>
<svg style="left:73.8px;top:729.3px" width="6" height="7.4" viewBox="0 0 6 7.4"><path d="M0.8 0.7 L4.9 3.7 L0.8 6.7Z" fill="none" stroke="#1E1E1E" stroke-width="1.3"/></svg>
<svg style="left:86.3px;top:729.8px" width="4.6" height="6.4" viewBox="0 0 4.6 6.4"><path d="M1 2.6 V1.7 A1.3 1.3 0 0 1 3.6 1.7 V2.6" stroke="#7DBDEB" fill="none" stroke-width="0.9"/><rect x="0" y="2.6" width="4.6" height="3.8" fill="#3E9DE0"/><rect x="1.7" y="3.5" width="1.2" height="1.6" fill="#CFE6F7"/></svg>
<svg style="left:94.0px;top:726.9px" width="14" height="12" viewBox="0 0 14 12"><path d="M0.5 1 H5.5 L7 2.5 H13.5 V11.5 H0.5Z" fill="#DCB67A"/><path d="M0.5 3.5 H13.5" stroke="#EBD5A8" stroke-width="0.8"/></svg>
<div class="t" style="left:112.5px;top:728.02px;font-size:11.2px;color:#1E1E1E;letter-spacing:-0.321px;">Interfaces</div>
<svg style="left:73.8px;top:746.1px" width="6" height="7.4" viewBox="0 0 6 7.4"><path d="M0.8 0.7 L4.9 3.7 L0.8 6.7Z" fill="none" stroke="#1E1E1E" stroke-width="1.3"/></svg>
<svg style="left:86.3px;top:746.6px" width="4.6" height="6.4" viewBox="0 0 4.6 6.4"><path d="M1 2.6 V1.7 A1.3 1.3 0 0 1 3.6 1.7 V2.6" stroke="#7DBDEB" fill="none" stroke-width="0.9"/><rect x="0" y="2.6" width="4.6" height="3.8" fill="#3E9DE0"/><rect x="1.7" y="3.5" width="1.2" height="1.6" fill="#CFE6F7"/></svg>
<svg style="left:94.0px;top:743.7px" width="14" height="12" viewBox="0 0 14 12"><path d="M8 4.2 Q7.3 3 5.6 3 Q3.2 3 3.2 6.4 Q3.2 9.8 5.6 9.8 Q7.3 9.8 8 8.6" fill="none" stroke="#2E8B2E" stroke-width="1.7"/><path d="M9.4 3.8 H13.2 M9.4 5.8 H13.2 M10.6 2.6 L10.2 7 M12.4 2.6 L12 7" stroke="#1F3F1F" stroke-width="0.9"/></svg>
<div class="t" style="left:112.5px;top:744.82px;font-size:11.2px;color:#1E1E1E;letter-spacing:-0.737px;">BaseService.cs</div>
<svg style="left:73.8px;top:762.9px" width="6" height="7.4" viewBox="0 0 6 7.4"><path d="M0.8 0.7 L4.9 3.7 L0.8 6.7Z" fill="none" stroke="#1E1E1E" stroke-width="1.3"/></svg>
<svg style="left:86.3px;top:763.4px" width="4.6" height="6.4" viewBox="0 0 4.6 6.4"><path d="M1 2.6 V1.7 A1.3 1.3 0 0 1 3.6 1.7 V2.6" stroke="#7DBDEB" fill="none" stroke-width="0.9"/><rect x="0" y="2.6" width="4.6" height="3.8" fill="#3E9DE0"/><rect x="1.7" y="3.5" width="1.2" height="1.6" fill="#CFE6F7"/></svg>
<svg style="left:94.0px;top:760.5px" width="14" height="12" viewBox="0 0 14 12"><path d="M8 4.2 Q7.3 3 5.6 3 Q3.2 3 3.2 6.4 Q3.2 9.8 5.6 9.8 Q7.3 9.8 8 8.6" fill="none" stroke="#2E8B2E" stroke-width="1.7"/><path d="M9.4 3.8 H13.2 M9.4 5.8 H13.2 M10.6 2.6 L10.2 7 M12.4 2.6 L12 7" stroke="#1F3F1F" stroke-width="0.9"/></svg>
<div class="t" style="left:112.5px;top:761.62px;font-size:11.2px;color:#1E1E1E;letter-spacing:-0.519px;">CategoryService.cs</div>
<svg style="left:73.8px;top:779.7px" width="6" height="7.4" viewBox="0 0 6 7.4"><path d="M0.8 0.7 L4.9 3.7 L0.8 6.7Z" fill="none" stroke="#1E1E1E" stroke-width="1.3"/></svg>
<svg style="left:86.3px;top:780.2px" width="4.6" height="6.4" viewBox="0 0 4.6 6.4"><path d="M1 2.6 V1.7 A1.3 1.3 0 0 1 3.6 1.7 V2.6" stroke="#7DBDEB" fill="none" stroke-width="0.9"/><rect x="0" y="2.6" width="4.6" height="3.8" fill="#3E9DE0"/><rect x="1.7" y="3.5" width="1.2" height="1.6" fill="#CFE6F7"/></svg>
<svg style="left:94.0px;top:777.3px" width="14" height="12" viewBox="0 0 14 12"><path d="M8 4.2 Q7.3 3 5.6 3 Q3.2 3 3.2 6.4 Q3.2 9.8 5.6 9.8 Q7.3 9.8 8 8.6" fill="none" stroke="#2E8B2E" stroke-width="1.7"/><path d="M9.4 3.8 H13.2 M9.4 5.8 H13.2 M10.6 2.6 L10.2 7 M12.4 2.6 L12 7" stroke="#1F3F1F" stroke-width="0.9"/></svg>
<div class="t" style="left:112.5px;top:778.42px;font-size:11.2px;color:#1E1E1E;letter-spacing:-0.670px;">ExamResultService.cs</div>
<svg style="left:73.8px;top:796.5px" width="6" height="7.4" viewBox="0 0 6 7.4"><path d="M0.8 0.7 L4.9 3.7 L0.8 6.7Z" fill="none" stroke="#1E1E1E" stroke-width="1.3"/></svg>
<svg style="left:86.3px;top:797.0px" width="4.6" height="6.4" viewBox="0 0 4.6 6.4"><path d="M1 2.6 V1.7 A1.3 1.3 0 0 1 3.6 1.7 V2.6" stroke="#7DBDEB" fill="none" stroke-width="0.9"/><rect x="0" y="2.6" width="4.6" height="3.8" fill="#3E9DE0"/><rect x="1.7" y="3.5" width="1.2" height="1.6" fill="#CFE6F7"/></svg>
<svg style="left:94.0px;top:794.1px" width="14" height="12" viewBox="0 0 14 12"><path d="M8 4.2 Q7.3 3 5.6 3 Q3.2 3 3.2 6.4 Q3.2 9.8 5.6 9.8 Q7.3 9.8 8 8.6" fill="none" stroke="#2E8B2E" stroke-width="1.7"/><path d="M9.4 3.8 H13.2 M9.4 5.8 H13.2 M10.6 2.6 L10.2 7 M12.4 2.6 L12 7" stroke="#1F3F1F" stroke-width="0.9"/></svg>
<div class="t" style="left:112.5px;top:795.22px;font-size:11.2px;color:#1E1E1E;letter-spacing:-0.736px;">ExamService.cs</div>
<svg style="left:57.3px;top:813.3px" width="6" height="7.4" viewBox="0 0 6 7.4"><path d="M0.8 0.7 L4.9 3.7 L0.8 6.7Z" fill="none" stroke="#1E1E1E" stroke-width="1.3"/></svg>
<svg style="left:69.8px;top:813.8px" width="4.6" height="6.4" viewBox="0 0 4.6 6.4"><path d="M1 2.6 V1.7 A1.3 1.3 0 0 1 3.6 1.7 V2.6" stroke="#7DBDEB" fill="none" stroke-width="0.9"/><rect x="0" y="2.6" width="4.6" height="3.8" fill="#3E9DE0"/><rect x="1.7" y="3.5" width="1.2" height="1.6" fill="#CFE6F7"/></svg>
<svg style="left:77.5px;top:809.9px" width="14" height="14" viewBox="0 0 14 14"><path d="M6 0.5 Q4 0.5 4 3 V10 Q4 13 2 13" fill="none" stroke="#1E1E1E" stroke-width="1.1"/><path d="M6 1 H12 Q10.5 1 10.5 3 V11" fill="none" stroke="#1E1E1E" stroke-width="1.1"/><circle cx="2.5" cy="11" r="2" fill="#fff" stroke="#1E1E1E"/></svg>
<div class="t" style="left:96.0px;top:812.02px;font-size:11.2px;color:#1E1E1E;letter-spacing:-0.273px;">appsettings.json</div>
<svg style="left:57.3px;top:830.1px" width="6" height="7.4" viewBox="0 0 6 7.4"><path d="M0.8 0.7 L4.9 3.7 L0.8 6.7Z" fill="none" stroke="#1E1E1E" stroke-width="1.3"/></svg>
<svg style="left:69.8px;top:830.6px" width="4.6" height="6.4" viewBox="0 0 4.6 6.4"><path d="M1 2.6 V1.7 A1.3 1.3 0 0 1 3.6 1.7 V2.6" stroke="#7DBDEB" fill="none" stroke-width="0.9"/><rect x="0" y="2.6" width="4.6" height="3.8" fill="#3E9DE0"/><rect x="1.7" y="3.5" width="1.2" height="1.6" fill="#CFE6F7"/></svg>
<svg style="left:77.5px;top:827.7px" width="14" height="12" viewBox="0 0 14 12"><path d="M8 4.2 Q7.3 3 5.6 3 Q3.2 3 3.2 6.4 Q3.2 9.8 5.6 9.8 Q7.3 9.8 8 8.6" fill="none" stroke="#2E8B2E" stroke-width="1.7"/><path d="M9.4 3.8 H13.2 M9.4 5.8 H13.2 M10.6 2.6 L10.2 7 M12.4 2.6 L12 7" stroke="#1F3F1F" stroke-width="0.9"/></svg>
<div class="t" style="left:96.0px;top:828.82px;font-size:11.2px;color:#1E1E1E;letter-spacing:-0.475px;">Program.cs</div>
<svg style="left:69.0px;top:847.5px" width="6" height="6"><circle cx="3" cy="3" r="2.6" fill="#E51400"/></svg>
<svg style="left:77.5px;top:843.5px" width="12" height="14" viewBox="0 0 12 14"><path d="M1 0.5 H8 L11 3.5 V13.5 H1Z" fill="#fff" stroke="#424242"/><path d="M3 5 H9 M3 7.5 H9 M3 10 H9" stroke="#424242" stroke-width="0.9"/></svg>
<div class="t" style="left:96.0px;top:845.62px;font-size:11.2px;color:#1E1E1E;letter-spacing:-0.279px;">ScaffoldingReadMe.txt</div>
<div style="position:absolute;left:413px;top:0px;width:14px;height:860px;background:#F2F1F4;"></div>
<svg style="left:415px;top:5px" width="9" height="6"><path d="M0.5 5 L4.5 0.5 L8.5 5Z" fill="#868999"/></svg>
<svg style="left:415px;top:849px" width="9" height="6"><path d="M0.5 0.5 L4.5 5 L8.5 0.5Z" fill="#868999"/></svg>
<div style="position:absolute;left:417px;top:256px;width:8px;height:556px;background:#C2C3C9;"></div>
</div>
<div style="position:absolute;left:1269px;top:997px;width:92px;height:18.5px;background:#F2F1F4;border:1px solid #CCCEDB;border-top:none;box-sizing:border-box;"></div>
<div class="t" style="left:1274px;top:1002.02px;font-size:11.2px;color:#0E70C0;letter-spacing:-0.299px;">Solution Explorer</div>
<div class="t" style="left:1366.5px;top:1002.02px;font-size:11.2px;color:#1E1E1E;letter-spacing:-0.476px;">Git Changes</div>
<div class="t" style="left:1718px;top:66px;font-size:11px;color:#1E1E1E;letter-spacing:-0.2px;transform:rotate(90deg);transform-origin:0 0;">Properties</div>
<div style="position:absolute;left:1722.5px;top:66.5px;width:5.5px;height:47.5px;background:#D6D6DC;"></div>
<div style="position:absolute;left:0px;top:1022px;width:1728px;height:22px;background:#007ACC;"></div>
<svg style="left:4px;top:1027px" width="16" height="12" viewBox="0 0 16 12"><path d="M3 0.5 H15.5 L13 11.5 H0.5Z" fill="none" stroke="#fff" stroke-width="1.1"/><path d="M4.5 3.5 H11.5 M4 6 H11 M3.5 8.5 H10.5" stroke="#fff" stroke-width="1"/></svg>
<div class="t" style="left:25.5px;top:1028.52px;font-size:11.2px;color:#FFFFFF;letter-spacing:-0.282px;">No quick actions available here</div>
<svg style="left:1379px;top:1027px" width="9" height="12" viewBox="0 0 9 12"><path d="M4.5 12 V1.5 M0.8 5 L4.5 1 L8.2 5" stroke="#fff" stroke-width="1.5" fill="none"/></svg>
<div class="t" style="left:1396px;top:1028.42px;font-size:11.2px;color:#FFFFFF;letter-spacing:-0.398px;">0</div>
<svg style="left:1407px;top:1031px" width="8" height="5"><path d="M0 4.5 L4 0.5 L8 4.5Z" fill="#fff"/></svg>
<svg style="left:1436px;top:1027px" width="11" height="11" viewBox="0 0 11 11"><path d="M1 10 L1.8 7 L8 0.8 L10.2 3 L4 9.2Z" fill="#fff"/></svg>
<div class="t" style="left:1454px;top:1028.42px;font-size:11.2px;color:#FFFFFF;letter-spacing:-0.398px;">4</div>
<svg style="left:1480px;top:1026px" width="14" height="14" viewBox="0 0 14 14"><path d="M7 0.5 L13.5 7 L7 13.5 L0.5 7Z" fill="#fff"/><path d="M5 3.5 L7.5 6 M7.5 6 V10.5 M7.5 6 L9.5 8" stroke="#007ACC" stroke-width="1.1"/><circle cx="7.5" cy="10.3" r="1.1" fill="#007ACC"/></svg>
<div class="t" style="left:1500px;top:1028.42px;font-size:11.2px;color:#FFFFFF;letter-spacing:-0.521px;">tedu_exam</div>
<svg style="left:1556px;top:1031px" width="8" height="5"><path d="M0 4.5 L4 0.5 L8 4.5Z" fill="#fff"/></svg>
<svg style="left:1584px;top:1026px" width="13" height="13" viewBox="0 0 13 13"><path d="M1 1 L6.5 7 V13 M12 1 L6.5 7" stroke="#fff" stroke-width="1.2" fill="none"/><circle cx="1.5" cy="1.5" r="1.2" fill="#fff"/><circle cx="11.5" cy="1.5" r="1.2" fill="#fff"/></svg>
<div class="t" style="left:1603.6px;top:1028.42px;font-size:11.2px;color:#FFFFFF;letter-spacing:-0.355px;">lessions/52</div>
<svg style="left:1662px;top:1031px" width="8" height="5"><path d="M0 4.5 L4 0.5 L8 4.5Z" fill="#fff"/></svg>
<svg style="left:1693px;top:1026px" width="18" height="16" viewBox="0 0 18 16"><path d="M2 11 Q4 9 4 6 A4 4 0 0 1 12 6 Q12 9 14 11Z" fill="#C9D9EC"/><circle cx="8" cy="12.5" r="1.5" fill="#C9D9EC"/><rect x="9.5" y="8" width="8" height="8" rx="1.5" fill="#E51400"/><text x="11.5" y="14.8" font-family="Liberation Sans" font-size="7.5" font-weight="bold" fill="#fff">2</text></svg>
<div style="position:absolute;left:0px;top:1044px;width:1728px;height:36px;background:#1F2022;"></div>
<svg style="left:14px;top:1055px" width="15" height="15" viewBox="0 0 15 15"><path d="M0 2.2 L6.2 1.3 V7 H0Z M7 1.2 L15 0 V7 H7Z M0 8 H6.2 V13.7 L0 12.8Z M7 8 H15 V15 L7 13.8Z" fill="#fff"/></svg>
<div style="position:absolute;left:50.0px;top:1077.8px;width:100px;height:2.2px;background:#F2E8C2;"></div>
<svg style="left:57.0px;top:1052px" width="13" height="20" viewBox="0 0 13 20"><path d="M1 2 L9 0.5 V17 L1 19Z" fill="#F2C94C"/><path d="M9 0.5 L12 2 V17.5 L9 17Z" fill="#E0A82E"/></svg>
<div class="t" style="left:77.0px;top:1055.78px;font-size:11.6px;color:#FFFFFF;letter-spacing:-0.579px;">Examination</div>
<div style="position:absolute;left:158.4px;top:1077.8px;width:100px;height:2.2px;background:#F2E8C2;"></div>
<svg style="left:161.4px;top:1051px" width="22" height="22" viewBox="0 0 22 22"><circle cx="11" cy="11" r="10" fill="#1FA0D8"/><path d="M3 14 Q5 5 13 5 Q19 5 20 11 Q15 8 11 11 Q8 14 11 18 Q5 18 3 14Z" fill="#6FD36B"/><circle cx="6.5" cy="15.5" r="5" fill="#2E8B3E"/><text x="3" y="17" font-size="4" fill="#fff" font-family="Liberation Sans">TEDU</text></svg>
<div class="t" style="left:185.4px;top:1055.78px;font-size:11.6px;color:#FFFFFF;letter-spacing:-0.533px;">c# - bypass i...</div>
<div style="position:absolute;left:266.8px;top:1077.8px;width:100px;height:2.2px;background:#F2E8C2;"></div>
<svg style="left:269.8px;top:1051px" width="22" height="22" viewBox="0 0 22 22"><circle cx="11" cy="11" r="10" fill="#1FA0D8"/><path d="M3 14 Q5 5 13 5 Q19 5 20 11 Q15 8 11 11 Q8 14 11 18 Q5 18 3 14Z" fill="#6FD36B"/><circle cx="6.5" cy="15.5" r="5" fill="#2E8B3E"/><text x="3" y="17" font-size="4" fill="#fff" font-family="Liberation Sans">TEDU</text></svg>
<div class="t" style="left:293.8px;top:1055.78px;font-size:11.6px;color:#FFFFFF;letter-spacing:-0.867px;"> - TEDU Exam...</div>
<div style="position:absolute;left:375.1px;top:1077.8px;width:100px;height:2.2px;background:#F2E8C2;"></div>
<svg style="left:379.1px;top:1051px" width="22" height="22" viewBox="0 0 22 22"><rect width="22" height="22" rx="2" fill="#4DA62A"/><path d="M16 5 H7 V17 H16" stroke="#fff" stroke-width="3" fill="none"/></svg>
<div class="t" style="left:402.1px;top:1055.78px;font-size:11.6px;color:#FFFFFF;letter-spacing:-0.648px;">TechSmith C...</div>
<div style="position:absolute;left:483.5px;top:1077.8px;width:100px;height:2.2px;background:#F2E8C2;"></div>
<svg style="left:488.5px;top:1053px" width="20" height="17" viewBox="0 0 20 17"><path d="M4 0 H20 L16 17 H0Z" fill="#2D6FCB"/><path d="M5 4 L10 8.5 L4 13" stroke="#fff" stroke-width="2" fill="none"/></svg>
<div class="t" style="left:510.5px;top:1055.78px;font-size:11.6px;color:#FFFFFF;letter-spacing:-0.585px;">Windows Po...</div>
<div style="position:absolute;left:591.9px;top:1077.8px;width:100px;height:2.2px;background:#F2E8C2;"></div>
<svg style="left:595.9px;top:1051px" width="22" height="22" viewBox="0 0 22 22"><rect x="2" y="1" width="15" height="12" fill="#E8E8E8" stroke="#888"/><path d="M0 14 Q8 10 18 14 L16 21 H2Z" fill="#D32F2F"/></svg>
<div class="t" style="left:618.9px;top:1055.78px;font-size:11.6px;color:#FFFFFF;letter-spacing:-0.502px;">Console1 - [...</div>
<div style="position:absolute;left:700.3px;top:1077.8px;width:100px;height:2.2px;background:#F2E8C2;"></div>
<svg style="left:705.3px;top:1052px" width="20" height="20" viewBox="0 0 20 20"><path d="M4 1 L18 3 L15 19 L1 17Z" fill="#7FC2E8"/><path d="M4 1 L18 3 L15 19" fill="none" stroke="#D8EEF8" stroke-width="1"/></svg>
<div class="t" style="left:727.3px;top:1055.78px;font-size:11.6px;color:#FFFFFF;letter-spacing:-0.383px;">ssl.txt - Note...</div>
<div style="position:absolute;left:808.7px;top:1077.8px;width:100px;height:2.2px;background:#F2E8C2;"></div>
<svg style="left:813.7px;top:1051px" width="20" height="22" viewBox="0 0 20 22"><rect x="8" y="6" width="10" height="16" fill="#C0C4CC"/><circle cx="6" cy="7" r="6" fill="#3DA1DB"/><path d="M2 6 Q6 2 10 7" stroke="#8BD65A" stroke-width="2" fill="none"/></svg>
<div class="t" style="left:835.7px;top:1055.78px;font-size:11.6px;color:#FFFFFF;letter-spacing:-0.297px;">Internet Info...</div>
<div style="position:absolute;left:914px;top:1044px;width:107px;height:36px;background:#4A4947;"></div>
<div style="position:absolute;left:914px;top:1077.8px;width:107px;height:2.2px;background:#F2E8C2;"></div>
<svg style="left:920px;top:1051.5px" width="23" height="21" viewBox="0 0 23 21"><path d="M16 0.5 L22.5 3.3 V17.7 L16 20.5 L6.5 12 L2.5 15.2 L0.5 14 V7 L2.5 5.8 L6.5 9 Z" fill="#7B55C7"/><path d="M16 0.5 L22.5 3.3 V17.7 L16 20.5 Z" fill="#A98AF2"/><path d="M16 6 L10 10.5 L16 15Z" fill="#4A4947"/><path d="M2.5 8.3 V12.7 L4.8 10.5Z" fill="#4A4947"/></svg>
<div class="t" style="left:944.0px;top:1055.78px;font-size:11.6px;color:#FFFFFF;letter-spacing:-0.622px;">TeduExam - ...</div>
<div style="position:absolute;left:1025.4px;top:1077.8px;width:100px;height:2.2px;background:#F2E8C2;"></div>
<svg style="left:1031.4px;top:1051px" width="20" height="22" viewBox="0 0 20 22"><path d="M2 2 L12 0 V14 L2 16Z" fill="#F2C94C"/><path d="M10 12 L18 20 M18 12 L10 20" stroke="#3DA1DB" stroke-width="2"/><path d="M1 18 V21 H4 M19 2 V5" stroke="#4DA62A" stroke-width="1.5" fill="none"/></svg>
<div class="t" style="left:1052.4px;top:1055.78px;font-size:11.6px;color:#FFFFFF;letter-spacing:-1.181px;">DESKTOP-JU...</div>
<div style="position:absolute;left:1133.8px;top:1077.8px;width:100px;height:2.2px;background:#F2E8C2;"></div>
<svg style="left:1139.8px;top:1051px" width="21" height="22" viewBox="0 0 21 22"><rect width="21" height="22" rx="3" fill="#E8523F"/><path d="M15 6 H7 V16 H15" stroke="#fff" stroke-width="3" fill="none"/></svg>
<div class="t" style="left:1160.8px;top:1055.78px;font-size:11.6px;color:#FFFFFF;letter-spacing:-0.565px;">Recording...</div>
<div style="position:absolute;left:1242.2px;top:1077.8px;width:100px;height:2.2px;background:#F2E8C2;"></div>
<svg style="left:1247.2px;top:1053px" width="20" height="17" viewBox="0 0 20 17"><rect x="0.5" y="0.5" width="19" height="16" fill="#0C0C0C" stroke="#CCC"/><rect x="0.5" y="0.5" width="19" height="3" fill="#CCC"/><path d="M3 7 H7 M3 10 H5" stroke="#CCC" stroke-width="1.2"/></svg>
<div class="t" style="left:1269.2px;top:1055.78px;font-size:11.6px;color:#FFFFFF;letter-spacing:-0.384px;">Administrat...</div>
<div style="position:absolute;left:1350.6px;top:1077.8px;width:100px;height:2.2px;background:#F2E8C2;"></div>
<svg style="left:1355.6px;top:1052px" width="20" height="20" viewBox="0 0 20 20"><rect x="1" y="1" width="18" height="14" fill="#B8D4E8" stroke="#DDD"/><path d="M3 10 L6 8 L8 11 L11 4 L13 9 L17 7" stroke="#2E6BB0" fill="none"/><path d="M4 16 H16 L18 19 H2Z" fill="#DDD"/></svg>
<div class="t" style="left:1377.6px;top:1055.78px;font-size:11.6px;color:#FFFFFF;letter-spacing:-0.583px;">Task Manager</div>
<svg style="left:1461px;top:1057px" width="11" height="7"><path d="M0.7 6.3 L5.5 1 L10.3 6.3" stroke="#fff" stroke-width="1.2" fill="none"/></svg>
<svg style="left:1483px;top:1052px" width="8" height="18" viewBox="0 0 8 18"><rect x="1" y="0" width="6" height="12" rx="1" fill="#E0E0E0"/><rect x="0" y="12" width="8" height="4" fill="#E0E0E0"/></svg>
<svg style="left:1501px;top:1052px" width="18" height="18" viewBox="0 0 18 18"><path d="M5 1 L9 4 L5 7 L1 4Z M13 1 L17 4 L13 7 L9 4Z M5 7 L9 10 L13 7 L17 10 L13 13 L9 10 L5 13 L1 10Z" fill="#E0E0E0"/><rect x="0" y="9" width="8" height="9" fill="#E51400"/><text x="1.8" y="16.5" font-size="7.5" fill="#fff" font-family="Liberation Sans" font-weight="bold">3</text></svg>
<svg style="left:1523px;top:1053px" width="17" height="13" viewBox="0 0 17 13"><rect x="3" y="3" width="13" height="8" fill="#E0E0E0"/><path d="M1 1 V5 M1 3 H3" stroke="#E0E0E0" stroke-width="1.2"/></svg>
<svg style="left:1545px;top:1053px" width="14" height="14" viewBox="0 0 14 14"><path d="M1 5 H4 L8 1.5 V12.5 L4 9 H1Z" fill="none" stroke="#E0E0E0" stroke-width="1.1"/><path d="M10 4.5 Q11.5 7 10 9.5 M11.5 3 Q14 7 11.5 11" stroke="#E0E0E0" fill="none"/></svg>
<svg style="left:1568px;top:1054px" width="15" height="13" viewBox="0 0 15 13"><path d="M1 12 A11 11 0 0 1 12 1 M4 12 A8 8 0 0 1 12 4 M7 12 A5 5 0 0 1 12 7" stroke="#E0E0E0" stroke-width="1.2" fill="none"/><circle cx="11.5" cy="11.5" r="1.3" fill="#E0E0E0"/></svg>
<div class="t" style="left:1591px;top:1056.58px;font-size:11.6px;color:#FFFFFF;letter-spacing:-1.482px;">ENG</div>
<div class="t" style="left:1630px;top:1048.18px;font-size:11.6px;color:#FFFFFF;letter-spacing:-0.661px;">5:28 PM</div>
<div class="t" style="left:1621.8px;top:1065.18px;font-size:11.6px;color:#FFFFFF;letter-spacing:-0.342px;">10/25/2021</div>
<svg style="left:1690px;top:1054px" width="24" height="22" viewBox="0 0 24 22"><path d="M1 0.5 H15.5 V10.5 H7 L3.5 14 V10.5 H1Z" fill="#F2F2F2"/><path d="M3.5 3.5 H13 M3.5 6 H13 M3.5 8.3 H10" stroke="#9A9A9A" stroke-width="1"/><circle cx="14.5" cy="13.5" r="5.8" fill="#1F2022" stroke="#CFCFCF" stroke-width="0.9"/><text x="11.6" y="17.3" font-size="10" fill="#fff" font-family="Liberation Sans">6</text></svg>
<div style="position:absolute;left:1724px;top:1044px;width:4px;height:36px;background:#3A3A3E;"></div>
</body></html>
